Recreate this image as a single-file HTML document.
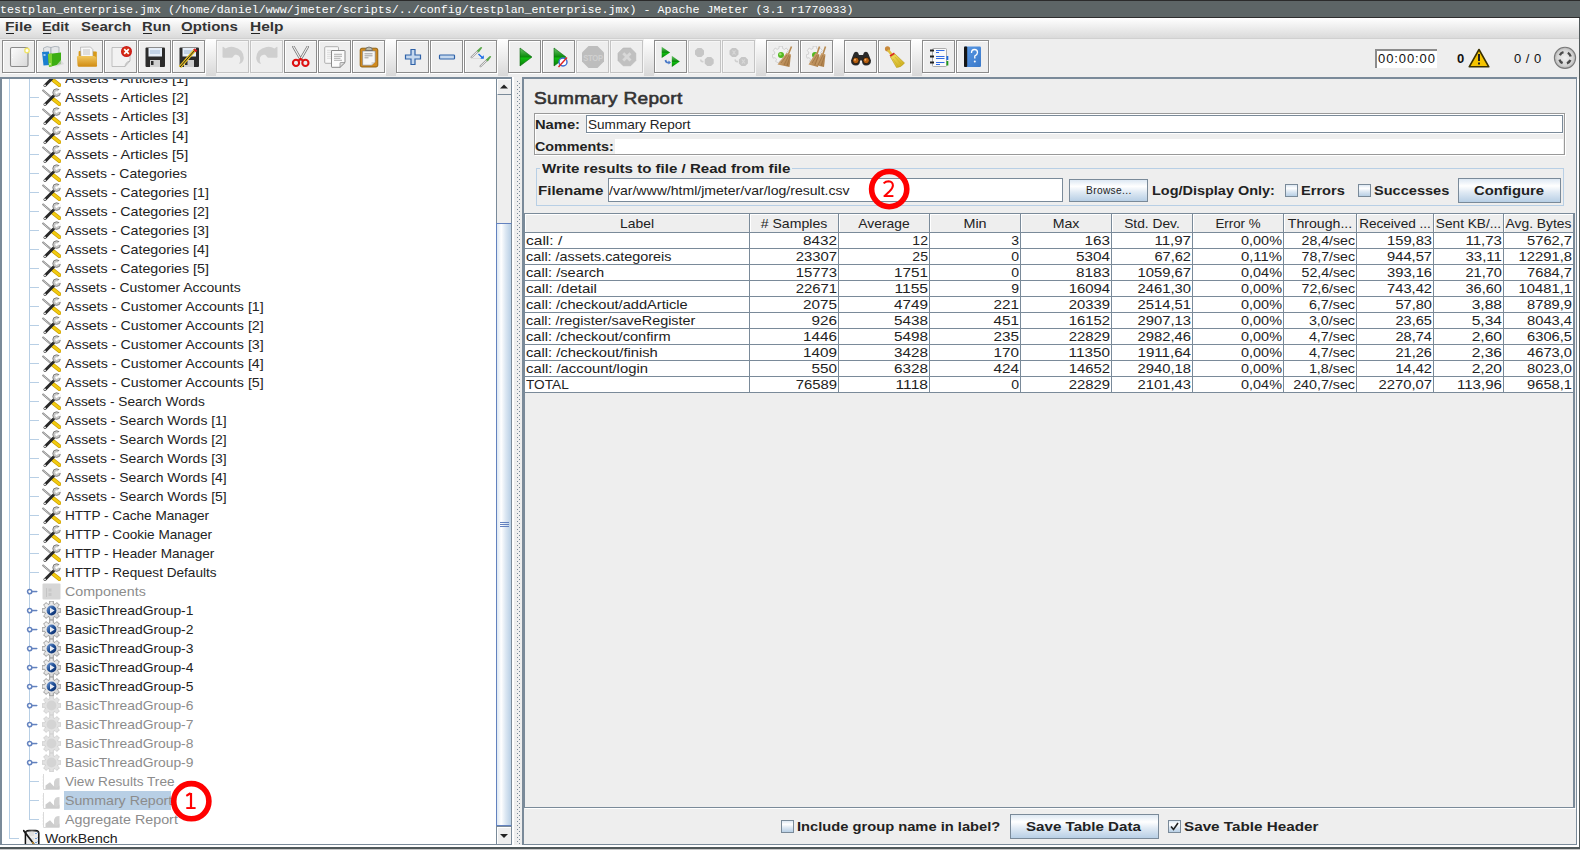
<!DOCTYPE html>
<html><head><meta charset="utf-8"><style>
*{margin:0;padding:0;box-sizing:border-box}
html,body{width:1580px;height:850px;overflow:hidden;background:#eeeeee}
body{position:relative;font-family:"Liberation Sans",sans-serif;color:#222}
div,svg{position:absolute}
.mono{font-family:"Liberation Mono",monospace;font-size:11.67px;line-height:11.67px;color:#fff;white-space:pre}
.menu{font-weight:bold;font-size:13px;line-height:13px;letter-spacing:1.1px;color:#333;white-space:pre}
.menu u{text-decoration:none;border-bottom:1px solid #333}
.tr{font-size:13px;line-height:13px;letter-spacing:0.54px;color:#222;white-space:pre}
.trd{font-size:13px;line-height:13px;letter-spacing:0.54px;color:#8c8c8c;white-space:pre}
.tc{font-size:13px;line-height:13px;letter-spacing:0.5px;color:#222;white-space:pre}
.b{font-weight:bold;font-size:13px;line-height:13px;letter-spacing:0.8px;color:#222;white-space:pre}
.ttl{font-weight:normal;font-size:17px;line-height:17px;letter-spacing:0.3px;color:#333;-webkit-text-stroke:0.6px #333;white-space:pre;transform:scaleX(1.12);transform-origin:0 0}
.sm{font-size:10.2px;line-height:10.2px;letter-spacing:0.2px;color:#222;white-space:pre}
.grad{background:linear-gradient(#dde8f3 0%,#ffffff 30%,#dde8f3 60%,#b8cfe5 100%)}
</style></head>
<body>
<div style="left:0px;top:0px;width:1580px;height:18px;background:#5d6566"></div>
<div style="left:0px;top:0px;width:1580px;height:1px;background:#2b2b2b"></div>
<div style="left:0px;top:17px;width:1580px;height:1px;background:#2e2e2e"></div>
<div class="mono" style="left:0px;top:5px;">testplan_enterprise.jmx (/home/daniel/www/jmeter/scripts/../config/testplan_enterprise.jmx) - Apache JMeter (3.1 r1770033)</div>
<div style="left:0px;top:18px;width:1580px;height:20px;background:linear-gradient(#ffffff,#dadada)"></div>
<div style="left:0px;top:38px;width:1580px;height:1px;background:#d0d0d0"></div>
<div class="menu" style="left:5.20px;top:20px;letter-spacing:0;transform:scaleX(1.205);transform-origin:0 0">File</div>
<div style="left:6px;top:33px;width:7.5px;height:1px;background:#222"></div>
<div class="menu" style="left:42.20px;top:20px;letter-spacing:0;transform:scaleX(1.1043);transform-origin:0 0">Edit</div>
<div style="left:43px;top:33px;width:8px;height:1px;background:#222"></div>
<div class="menu" style="left:81.20px;top:20px;letter-spacing:0;transform:scaleX(1.1585);transform-origin:0 0">Search</div>
<div class="menu" style="left:142.20px;top:20px;letter-spacing:0;transform:scaleX(1.1348);transform-origin:0 0">Run</div>
<div style="left:143px;top:33px;width:9px;height:1px;background:#222"></div>
<div class="menu" style="left:181.20px;top:20px;letter-spacing:0;transform:scaleX(1.1596);transform-origin:0 0">Options</div>
<div style="left:182px;top:33px;width:10.5px;height:1px;background:#222"></div>
<div class="menu" style="left:250.20px;top:20px;letter-spacing:0;transform:scaleX(1.1923);transform-origin:0 0">Help</div>
<div style="left:251px;top:33px;width:9px;height:1px;background:#222"></div>
<div style="left:206px;top:39px;width:10px;height:37px;background:linear-gradient(#ffffff,#d8d8d8)"></div>
<div style="left:386px;top:39px;width:10px;height:37px;background:linear-gradient(#ffffff,#d8d8d8)"></div>
<div style="left:498px;top:39px;width:10px;height:37px;background:linear-gradient(#ffffff,#d8d8d8)"></div>
<div style="left:644px;top:39px;width:10px;height:37px;background:linear-gradient(#ffffff,#d8d8d8)"></div>
<div style="left:756px;top:39px;width:10px;height:37px;background:linear-gradient(#ffffff,#d8d8d8)"></div>
<div style="left:834px;top:39px;width:10px;height:37px;background:linear-gradient(#ffffff,#d8d8d8)"></div>
<div style="left:912px;top:39px;width:10px;height:37px;background:linear-gradient(#ffffff,#d8d8d8)"></div>
<div style="left:990px;top:39px;width:590px;height:37px;background:#eeeeee"></div>
<div style="left:0px;top:77px;width:512px;height:2px;background:#7a8a99"></div>
<div style="left:522px;top:77px;width:1055px;height:2px;background:#7a8a99"></div>
<div style="left:0px;top:79px;width:496px;height:765px;background:#ffffff"></div>
<div style="left:0px;top:77px;width:2px;height:768px;background:#7a8a99"></div>
<div style="left:0px;top:844px;width:512px;height:1px;background:#7a8a99"></div>
<div style="left:0px;top:845px;width:1578px;height:2px;background:#ffffff"></div>
<div style="left:496px;top:79px;width:1px;height:765px;background:#7a8a99"></div>
<div style="left:497px;top:79px;width:14px;height:765px;background:#eeeeee"></div>
<div style="left:511px;top:79px;width:1px;height:766px;background:#7a8a99"></div>
<div style="left:497px;top:79px;width:14px;height:16px;background:#eeeeee;border-top:1px solid #fff;border-left:1px solid #fff;border-bottom:1px solid #7a8a99"></div>
<svg style="left:497px;top:79px" width="14" height="16"><path d="M3 9.5 L7 5.5 L11 9.5 Z" fill="#222"/></svg>
<div style="left:496px;top:223px;width:16px;height:603px;background:linear-gradient(90deg,#dde8f3 0%,#ffffff 30%,#dde8f3 60%,#b8cfe5 100%);border:1px solid #6382bf;border-right:1px solid #7a8a99"></div>
<div style="left:500px;top:522px;width:9px;height:1px;background:#6382bf"></div>
<div style="left:500px;top:524px;width:9px;height:1px;background:#6382bf"></div>
<div style="left:500px;top:526px;width:9px;height:1px;background:#6382bf"></div>
<div style="left:497px;top:826px;width:14px;height:18px;background:#eeeeee;border-top:1px solid #7a8a99"></div>
<div style="left:497px;top:827px;width:14px;height:17px;border-top:1px solid #fff;border-left:1px solid #fff"></div>
<svg style="left:497px;top:827px" width="14" height="17"><path d="M3 7 L11 7 L7 11 Z" fill="#222"/></svg>
<div style="left:512px;top:77px;width:2px;height:768px;background:#ffffff"></div>
<div style="left:514px;top:77px;width:8px;height:768px;background:#eeeeee"></div>
<svg style="left:0;top:0" width="1580" height="850"><path d="M517 81h1v1h-1z M519 83h1v1h-1z M517 85h1v1h-1z M519 87h1v1h-1z M517 89h1v1h-1z M519 91h1v1h-1z M517 93h1v1h-1z M519 95h1v1h-1z M517 97h1v1h-1z M519 99h1v1h-1z M517 101h1v1h-1z M519 103h1v1h-1z M517 105h1v1h-1z M519 107h1v1h-1z M517 109h1v1h-1z M519 111h1v1h-1z M517 113h1v1h-1z M519 115h1v1h-1z M517 117h1v1h-1z M519 119h1v1h-1z M517 121h1v1h-1z M519 123h1v1h-1z M517 125h1v1h-1z M519 127h1v1h-1z M517 129h1v1h-1z M519 131h1v1h-1z M517 133h1v1h-1z M519 135h1v1h-1z M517 137h1v1h-1z M519 139h1v1h-1z M517 141h1v1h-1z M519 143h1v1h-1z M517 145h1v1h-1z M519 147h1v1h-1z M517 149h1v1h-1z M519 151h1v1h-1z M517 153h1v1h-1z M519 155h1v1h-1z M517 157h1v1h-1z M519 159h1v1h-1z M517 161h1v1h-1z M519 163h1v1h-1z M517 165h1v1h-1z M519 167h1v1h-1z M517 169h1v1h-1z M519 171h1v1h-1z M517 173h1v1h-1z M519 175h1v1h-1z M517 177h1v1h-1z M519 179h1v1h-1z M517 181h1v1h-1z M519 183h1v1h-1z M517 185h1v1h-1z M519 187h1v1h-1z M517 189h1v1h-1z M519 191h1v1h-1z M517 193h1v1h-1z M519 195h1v1h-1z M517 197h1v1h-1z M519 199h1v1h-1z M517 201h1v1h-1z M519 203h1v1h-1z M517 205h1v1h-1z M519 207h1v1h-1z M517 209h1v1h-1z M519 211h1v1h-1z M517 213h1v1h-1z M519 215h1v1h-1z M517 217h1v1h-1z M519 219h1v1h-1z M517 221h1v1h-1z M519 223h1v1h-1z M517 225h1v1h-1z M519 227h1v1h-1z M517 229h1v1h-1z M519 231h1v1h-1z M517 233h1v1h-1z M519 235h1v1h-1z M517 237h1v1h-1z M519 239h1v1h-1z M517 241h1v1h-1z M519 243h1v1h-1z M517 245h1v1h-1z M519 247h1v1h-1z M517 249h1v1h-1z M519 251h1v1h-1z M517 253h1v1h-1z M519 255h1v1h-1z M517 257h1v1h-1z M519 259h1v1h-1z M517 261h1v1h-1z M519 263h1v1h-1z M517 265h1v1h-1z M519 267h1v1h-1z M517 269h1v1h-1z M519 271h1v1h-1z M517 273h1v1h-1z M519 275h1v1h-1z M517 277h1v1h-1z M519 279h1v1h-1z M517 281h1v1h-1z M519 283h1v1h-1z M517 285h1v1h-1z M519 287h1v1h-1z M517 289h1v1h-1z M519 291h1v1h-1z M517 293h1v1h-1z M519 295h1v1h-1z M517 297h1v1h-1z M519 299h1v1h-1z M517 301h1v1h-1z M519 303h1v1h-1z M517 305h1v1h-1z M519 307h1v1h-1z M517 309h1v1h-1z M519 311h1v1h-1z M517 313h1v1h-1z M519 315h1v1h-1z M517 317h1v1h-1z M519 319h1v1h-1z M517 321h1v1h-1z M519 323h1v1h-1z M517 325h1v1h-1z M519 327h1v1h-1z M517 329h1v1h-1z M519 331h1v1h-1z M517 333h1v1h-1z M519 335h1v1h-1z M517 337h1v1h-1z M519 339h1v1h-1z M517 341h1v1h-1z M519 343h1v1h-1z M517 345h1v1h-1z M519 347h1v1h-1z M517 349h1v1h-1z M519 351h1v1h-1z M517 353h1v1h-1z M519 355h1v1h-1z M517 357h1v1h-1z M519 359h1v1h-1z M517 361h1v1h-1z M519 363h1v1h-1z M517 365h1v1h-1z M519 367h1v1h-1z M517 369h1v1h-1z M519 371h1v1h-1z M517 373h1v1h-1z M519 375h1v1h-1z M517 377h1v1h-1z M519 379h1v1h-1z M517 381h1v1h-1z M519 383h1v1h-1z M517 385h1v1h-1z M519 387h1v1h-1z M517 389h1v1h-1z M519 391h1v1h-1z M517 393h1v1h-1z M519 395h1v1h-1z M517 397h1v1h-1z M519 399h1v1h-1z M517 401h1v1h-1z M519 403h1v1h-1z M517 405h1v1h-1z M519 407h1v1h-1z M517 409h1v1h-1z M519 411h1v1h-1z M517 413h1v1h-1z M519 415h1v1h-1z M517 417h1v1h-1z M519 419h1v1h-1z M517 421h1v1h-1z M519 423h1v1h-1z M517 425h1v1h-1z M519 427h1v1h-1z M517 429h1v1h-1z M519 431h1v1h-1z M517 433h1v1h-1z M519 435h1v1h-1z M517 437h1v1h-1z M519 439h1v1h-1z M517 441h1v1h-1z M519 443h1v1h-1z M517 445h1v1h-1z M519 447h1v1h-1z M517 449h1v1h-1z M519 451h1v1h-1z M517 453h1v1h-1z M519 455h1v1h-1z M517 457h1v1h-1z M519 459h1v1h-1z M517 461h1v1h-1z M519 463h1v1h-1z M517 465h1v1h-1z M519 467h1v1h-1z M517 469h1v1h-1z M519 471h1v1h-1z M517 473h1v1h-1z M519 475h1v1h-1z M517 477h1v1h-1z M519 479h1v1h-1z M517 481h1v1h-1z M519 483h1v1h-1z M517 485h1v1h-1z M519 487h1v1h-1z M517 489h1v1h-1z M519 491h1v1h-1z M517 493h1v1h-1z M519 495h1v1h-1z M517 497h1v1h-1z M519 499h1v1h-1z M517 501h1v1h-1z M519 503h1v1h-1z M517 505h1v1h-1z M519 507h1v1h-1z M517 509h1v1h-1z M519 511h1v1h-1z M517 513h1v1h-1z M519 515h1v1h-1z M517 517h1v1h-1z M519 519h1v1h-1z M517 521h1v1h-1z M519 523h1v1h-1z M517 525h1v1h-1z M519 527h1v1h-1z M517 529h1v1h-1z M519 531h1v1h-1z M517 533h1v1h-1z M519 535h1v1h-1z M517 537h1v1h-1z M519 539h1v1h-1z M517 541h1v1h-1z M519 543h1v1h-1z M517 545h1v1h-1z M519 547h1v1h-1z M517 549h1v1h-1z M519 551h1v1h-1z M517 553h1v1h-1z M519 555h1v1h-1z M517 557h1v1h-1z M519 559h1v1h-1z M517 561h1v1h-1z M519 563h1v1h-1z M517 565h1v1h-1z M519 567h1v1h-1z M517 569h1v1h-1z M519 571h1v1h-1z M517 573h1v1h-1z M519 575h1v1h-1z M517 577h1v1h-1z M519 579h1v1h-1z M517 581h1v1h-1z M519 583h1v1h-1z M517 585h1v1h-1z M519 587h1v1h-1z M517 589h1v1h-1z M519 591h1v1h-1z M517 593h1v1h-1z M519 595h1v1h-1z M517 597h1v1h-1z M519 599h1v1h-1z M517 601h1v1h-1z M519 603h1v1h-1z M517 605h1v1h-1z M519 607h1v1h-1z M517 609h1v1h-1z M519 611h1v1h-1z M517 613h1v1h-1z M519 615h1v1h-1z M517 617h1v1h-1z M519 619h1v1h-1z M517 621h1v1h-1z M519 623h1v1h-1z M517 625h1v1h-1z M519 627h1v1h-1z M517 629h1v1h-1z M519 631h1v1h-1z M517 633h1v1h-1z M519 635h1v1h-1z M517 637h1v1h-1z M519 639h1v1h-1z M517 641h1v1h-1z M519 643h1v1h-1z M517 645h1v1h-1z M519 647h1v1h-1z M517 649h1v1h-1z M519 651h1v1h-1z M517 653h1v1h-1z M519 655h1v1h-1z M517 657h1v1h-1z M519 659h1v1h-1z M517 661h1v1h-1z M519 663h1v1h-1z M517 665h1v1h-1z M519 667h1v1h-1z M517 669h1v1h-1z M519 671h1v1h-1z M517 673h1v1h-1z M519 675h1v1h-1z M517 677h1v1h-1z M519 679h1v1h-1z M517 681h1v1h-1z M519 683h1v1h-1z M517 685h1v1h-1z M519 687h1v1h-1z M517 689h1v1h-1z M519 691h1v1h-1z M517 693h1v1h-1z M519 695h1v1h-1z M517 697h1v1h-1z M519 699h1v1h-1z M517 701h1v1h-1z M519 703h1v1h-1z M517 705h1v1h-1z M519 707h1v1h-1z M517 709h1v1h-1z M519 711h1v1h-1z M517 713h1v1h-1z M519 715h1v1h-1z M517 717h1v1h-1z M519 719h1v1h-1z M517 721h1v1h-1z M519 723h1v1h-1z M517 725h1v1h-1z M519 727h1v1h-1z M517 729h1v1h-1z M519 731h1v1h-1z M517 733h1v1h-1z M519 735h1v1h-1z M517 737h1v1h-1z M519 739h1v1h-1z M517 741h1v1h-1z M519 743h1v1h-1z M517 745h1v1h-1z M519 747h1v1h-1z M517 749h1v1h-1z M519 751h1v1h-1z M517 753h1v1h-1z M519 755h1v1h-1z M517 757h1v1h-1z M519 759h1v1h-1z M517 761h1v1h-1z M519 763h1v1h-1z M517 765h1v1h-1z M519 767h1v1h-1z M517 769h1v1h-1z M519 771h1v1h-1z M517 773h1v1h-1z M519 775h1v1h-1z M517 777h1v1h-1z M519 779h1v1h-1z M517 781h1v1h-1z M519 783h1v1h-1z M517 785h1v1h-1z M519 787h1v1h-1z M517 789h1v1h-1z M519 791h1v1h-1z M517 793h1v1h-1z M519 795h1v1h-1z M517 797h1v1h-1z M519 799h1v1h-1z M517 801h1v1h-1z M519 803h1v1h-1z M517 805h1v1h-1z M519 807h1v1h-1z M517 809h1v1h-1z M519 811h1v1h-1z M517 813h1v1h-1z M519 815h1v1h-1z M517 817h1v1h-1z M519 819h1v1h-1z M517 821h1v1h-1z M519 823h1v1h-1z M517 825h1v1h-1z M519 827h1v1h-1z M517 829h1v1h-1z M519 831h1v1h-1z M517 833h1v1h-1z M519 835h1v1h-1z M517 837h1v1h-1z M519 839h1v1h-1z M517 841h1v1h-1z M519 843h1v1h-1z" fill="#7a8a99"/></svg>
<div style="left:522px;top:77px;width:2px;height:768px;background:#7a8a99"></div>
<div style="left:1576px;top:77px;width:1px;height:768px;background:#7a8a99"></div>
<div style="left:522px;top:844px;width:1055px;height:1px;background:#7a8a99"></div>
<div style="left:1577px;top:79px;width:2px;height:768px;background:#ffffff"></div>
<div style="left:1579px;top:18px;width:1px;height:832px;background:#50585a"></div>
<div style="left:0px;top:847px;width:1580px;height:2px;background:#50585a"></div>
<div style="left:0px;top:849px;width:1580px;height:1px;background:#c8c8c8"></div>
<div style="left:2px;top:79px;width:494px;height:765px;overflow:hidden"><div style="left:-2px;top:-79px;width:1580px;height:850px">
<div style="left:9px;top:79px;width:1px;height:760px;background:#b8cfe5"></div>
<div style="left:9px;top:838px;width:10px;height:1px;background:#b8cfe5"></div>
<div style="left:29px;top:79px;width:1px;height:741px;background:#b8cfe5"></div>
<div style="left:29px;top:78px;width:10px;height:1px;background:#b8cfe5"></div>
<div style="left:29px;top:97px;width:10px;height:1px;background:#b8cfe5"></div>
<div style="left:29px;top:116px;width:10px;height:1px;background:#b8cfe5"></div>
<div style="left:29px;top:135px;width:10px;height:1px;background:#b8cfe5"></div>
<div style="left:29px;top:154px;width:10px;height:1px;background:#b8cfe5"></div>
<div style="left:29px;top:173px;width:10px;height:1px;background:#b8cfe5"></div>
<div style="left:29px;top:192px;width:10px;height:1px;background:#b8cfe5"></div>
<div style="left:29px;top:211px;width:10px;height:1px;background:#b8cfe5"></div>
<div style="left:29px;top:230px;width:10px;height:1px;background:#b8cfe5"></div>
<div style="left:29px;top:249px;width:10px;height:1px;background:#b8cfe5"></div>
<div style="left:29px;top:268px;width:10px;height:1px;background:#b8cfe5"></div>
<div style="left:29px;top:287px;width:10px;height:1px;background:#b8cfe5"></div>
<div style="left:29px;top:306px;width:10px;height:1px;background:#b8cfe5"></div>
<div style="left:29px;top:325px;width:10px;height:1px;background:#b8cfe5"></div>
<div style="left:29px;top:344px;width:10px;height:1px;background:#b8cfe5"></div>
<div style="left:29px;top:363px;width:10px;height:1px;background:#b8cfe5"></div>
<div style="left:29px;top:382px;width:10px;height:1px;background:#b8cfe5"></div>
<div style="left:29px;top:401px;width:10px;height:1px;background:#b8cfe5"></div>
<div style="left:29px;top:420px;width:10px;height:1px;background:#b8cfe5"></div>
<div style="left:29px;top:439px;width:10px;height:1px;background:#b8cfe5"></div>
<div style="left:29px;top:458px;width:10px;height:1px;background:#b8cfe5"></div>
<div style="left:29px;top:477px;width:10px;height:1px;background:#b8cfe5"></div>
<div style="left:29px;top:496px;width:10px;height:1px;background:#b8cfe5"></div>
<div style="left:29px;top:515px;width:10px;height:1px;background:#b8cfe5"></div>
<div style="left:29px;top:534px;width:10px;height:1px;background:#b8cfe5"></div>
<div style="left:29px;top:553px;width:10px;height:1px;background:#b8cfe5"></div>
<div style="left:29px;top:572px;width:10px;height:1px;background:#b8cfe5"></div>
<div style="left:29px;top:781px;width:10px;height:1px;background:#b8cfe5"></div>
<div style="left:29px;top:800px;width:10px;height:1px;background:#b8cfe5"></div>
<div style="left:29px;top:819px;width:10px;height:1px;background:#b8cfe5"></div>
<div style="left:64px;top:791px;width:107px;height:19px;background:#b8cfe5"></div>
<svg style="left:42px;top:69px" width="19" height="19"><line x1="0.5" y1="2" x2="10.5" y2="10.5" stroke="#777" stroke-width="1.8"/>
<line x1="0.5" y1="2" x2="10.5" y2="10.5" stroke="#f4f4f4" stroke-width="0.7"/>
<line x1="11" y1="11" x2="17.3" y2="16" stroke="#c89a00" stroke-width="4" stroke-linecap="round"/>
<line x1="11" y1="11" x2="17.3" y2="16" stroke="#f2cc10" stroke-width="2.6" stroke-linecap="round"/>
<line x1="3" y1="16.5" x2="11.5" y2="8" stroke="#2a2a2a" stroke-width="3" stroke-linecap="round"/>
<circle cx="3" cy="16.5" r="0.9" fill="#fff"/>
<circle cx="14.6" cy="4.6" r="3.8" fill="#c8c8c8" stroke="#6a6a6a" stroke-width="0.8"/>
<path d="M14.6 4.6 L18.5 0.2 L19 5 Z" fill="#fff"/>
<circle cx="14.6" cy="4.6" r="1.3" fill="#fff"/></svg>
<div class="tr" style="left:65px;top:72px;transform:scaleX(1.1142);transform-origin:0 0;letter-spacing:0px;">Assets - Articles [1]</div>
<svg style="left:42px;top:88px" width="19" height="19"><line x1="0.5" y1="2" x2="10.5" y2="10.5" stroke="#777" stroke-width="1.8"/>
<line x1="0.5" y1="2" x2="10.5" y2="10.5" stroke="#f4f4f4" stroke-width="0.7"/>
<line x1="11" y1="11" x2="17.3" y2="16" stroke="#c89a00" stroke-width="4" stroke-linecap="round"/>
<line x1="11" y1="11" x2="17.3" y2="16" stroke="#f2cc10" stroke-width="2.6" stroke-linecap="round"/>
<line x1="3" y1="16.5" x2="11.5" y2="8" stroke="#2a2a2a" stroke-width="3" stroke-linecap="round"/>
<circle cx="3" cy="16.5" r="0.9" fill="#fff"/>
<circle cx="14.6" cy="4.6" r="3.8" fill="#c8c8c8" stroke="#6a6a6a" stroke-width="0.8"/>
<path d="M14.6 4.6 L18.5 0.2 L19 5 Z" fill="#fff"/>
<circle cx="14.6" cy="4.6" r="1.3" fill="#fff"/></svg>
<div class="tr" style="left:65px;top:91px;transform:scaleX(1.1142);transform-origin:0 0;letter-spacing:0px;">Assets - Articles [2]</div>
<svg style="left:42px;top:107px" width="19" height="19"><line x1="0.5" y1="2" x2="10.5" y2="10.5" stroke="#777" stroke-width="1.8"/>
<line x1="0.5" y1="2" x2="10.5" y2="10.5" stroke="#f4f4f4" stroke-width="0.7"/>
<line x1="11" y1="11" x2="17.3" y2="16" stroke="#c89a00" stroke-width="4" stroke-linecap="round"/>
<line x1="11" y1="11" x2="17.3" y2="16" stroke="#f2cc10" stroke-width="2.6" stroke-linecap="round"/>
<line x1="3" y1="16.5" x2="11.5" y2="8" stroke="#2a2a2a" stroke-width="3" stroke-linecap="round"/>
<circle cx="3" cy="16.5" r="0.9" fill="#fff"/>
<circle cx="14.6" cy="4.6" r="3.8" fill="#c8c8c8" stroke="#6a6a6a" stroke-width="0.8"/>
<path d="M14.6 4.6 L18.5 0.2 L19 5 Z" fill="#fff"/>
<circle cx="14.6" cy="4.6" r="1.3" fill="#fff"/></svg>
<div class="tr" style="left:65px;top:110px;transform:scaleX(1.1142);transform-origin:0 0;letter-spacing:0px;">Assets - Articles [3]</div>
<svg style="left:42px;top:126px" width="19" height="19"><line x1="0.5" y1="2" x2="10.5" y2="10.5" stroke="#777" stroke-width="1.8"/>
<line x1="0.5" y1="2" x2="10.5" y2="10.5" stroke="#f4f4f4" stroke-width="0.7"/>
<line x1="11" y1="11" x2="17.3" y2="16" stroke="#c89a00" stroke-width="4" stroke-linecap="round"/>
<line x1="11" y1="11" x2="17.3" y2="16" stroke="#f2cc10" stroke-width="2.6" stroke-linecap="round"/>
<line x1="3" y1="16.5" x2="11.5" y2="8" stroke="#2a2a2a" stroke-width="3" stroke-linecap="round"/>
<circle cx="3" cy="16.5" r="0.9" fill="#fff"/>
<circle cx="14.6" cy="4.6" r="3.8" fill="#c8c8c8" stroke="#6a6a6a" stroke-width="0.8"/>
<path d="M14.6 4.6 L18.5 0.2 L19 5 Z" fill="#fff"/>
<circle cx="14.6" cy="4.6" r="1.3" fill="#fff"/></svg>
<div class="tr" style="left:65px;top:129px;transform:scaleX(1.1142);transform-origin:0 0;letter-spacing:0px;">Assets - Articles [4]</div>
<svg style="left:42px;top:145px" width="19" height="19"><line x1="0.5" y1="2" x2="10.5" y2="10.5" stroke="#777" stroke-width="1.8"/>
<line x1="0.5" y1="2" x2="10.5" y2="10.5" stroke="#f4f4f4" stroke-width="0.7"/>
<line x1="11" y1="11" x2="17.3" y2="16" stroke="#c89a00" stroke-width="4" stroke-linecap="round"/>
<line x1="11" y1="11" x2="17.3" y2="16" stroke="#f2cc10" stroke-width="2.6" stroke-linecap="round"/>
<line x1="3" y1="16.5" x2="11.5" y2="8" stroke="#2a2a2a" stroke-width="3" stroke-linecap="round"/>
<circle cx="3" cy="16.5" r="0.9" fill="#fff"/>
<circle cx="14.6" cy="4.6" r="3.8" fill="#c8c8c8" stroke="#6a6a6a" stroke-width="0.8"/>
<path d="M14.6 4.6 L18.5 0.2 L19 5 Z" fill="#fff"/>
<circle cx="14.6" cy="4.6" r="1.3" fill="#fff"/></svg>
<div class="tr" style="left:65px;top:148px;transform:scaleX(1.1142);transform-origin:0 0;letter-spacing:0px;">Assets - Articles [5]</div>
<svg style="left:42px;top:164px" width="19" height="19"><line x1="0.5" y1="2" x2="10.5" y2="10.5" stroke="#777" stroke-width="1.8"/>
<line x1="0.5" y1="2" x2="10.5" y2="10.5" stroke="#f4f4f4" stroke-width="0.7"/>
<line x1="11" y1="11" x2="17.3" y2="16" stroke="#c89a00" stroke-width="4" stroke-linecap="round"/>
<line x1="11" y1="11" x2="17.3" y2="16" stroke="#f2cc10" stroke-width="2.6" stroke-linecap="round"/>
<line x1="3" y1="16.5" x2="11.5" y2="8" stroke="#2a2a2a" stroke-width="3" stroke-linecap="round"/>
<circle cx="3" cy="16.5" r="0.9" fill="#fff"/>
<circle cx="14.6" cy="4.6" r="3.8" fill="#c8c8c8" stroke="#6a6a6a" stroke-width="0.8"/>
<path d="M14.6 4.6 L18.5 0.2 L19 5 Z" fill="#fff"/>
<circle cx="14.6" cy="4.6" r="1.3" fill="#fff"/></svg>
<div class="tr" style="left:65px;top:167px;transform:scaleX(1.0751);transform-origin:0 0;letter-spacing:0px;">Assets - Categories</div>
<svg style="left:42px;top:183px" width="19" height="19"><line x1="0.5" y1="2" x2="10.5" y2="10.5" stroke="#777" stroke-width="1.8"/>
<line x1="0.5" y1="2" x2="10.5" y2="10.5" stroke="#f4f4f4" stroke-width="0.7"/>
<line x1="11" y1="11" x2="17.3" y2="16" stroke="#c89a00" stroke-width="4" stroke-linecap="round"/>
<line x1="11" y1="11" x2="17.3" y2="16" stroke="#f2cc10" stroke-width="2.6" stroke-linecap="round"/>
<line x1="3" y1="16.5" x2="11.5" y2="8" stroke="#2a2a2a" stroke-width="3" stroke-linecap="round"/>
<circle cx="3" cy="16.5" r="0.9" fill="#fff"/>
<circle cx="14.6" cy="4.6" r="3.8" fill="#c8c8c8" stroke="#6a6a6a" stroke-width="0.8"/>
<path d="M14.6 4.6 L18.5 0.2 L19 5 Z" fill="#fff"/>
<circle cx="14.6" cy="4.6" r="1.3" fill="#fff"/></svg>
<div class="tr" style="left:65px;top:186px;transform:scaleX(1.0939);transform-origin:0 0;letter-spacing:0px;">Assets - Categories [1]</div>
<svg style="left:42px;top:202px" width="19" height="19"><line x1="0.5" y1="2" x2="10.5" y2="10.5" stroke="#777" stroke-width="1.8"/>
<line x1="0.5" y1="2" x2="10.5" y2="10.5" stroke="#f4f4f4" stroke-width="0.7"/>
<line x1="11" y1="11" x2="17.3" y2="16" stroke="#c89a00" stroke-width="4" stroke-linecap="round"/>
<line x1="11" y1="11" x2="17.3" y2="16" stroke="#f2cc10" stroke-width="2.6" stroke-linecap="round"/>
<line x1="3" y1="16.5" x2="11.5" y2="8" stroke="#2a2a2a" stroke-width="3" stroke-linecap="round"/>
<circle cx="3" cy="16.5" r="0.9" fill="#fff"/>
<circle cx="14.6" cy="4.6" r="3.8" fill="#c8c8c8" stroke="#6a6a6a" stroke-width="0.8"/>
<path d="M14.6 4.6 L18.5 0.2 L19 5 Z" fill="#fff"/>
<circle cx="14.6" cy="4.6" r="1.3" fill="#fff"/></svg>
<div class="tr" style="left:65px;top:205px;transform:scaleX(1.0939);transform-origin:0 0;letter-spacing:0px;">Assets - Categories [2]</div>
<svg style="left:42px;top:221px" width="19" height="19"><line x1="0.5" y1="2" x2="10.5" y2="10.5" stroke="#777" stroke-width="1.8"/>
<line x1="0.5" y1="2" x2="10.5" y2="10.5" stroke="#f4f4f4" stroke-width="0.7"/>
<line x1="11" y1="11" x2="17.3" y2="16" stroke="#c89a00" stroke-width="4" stroke-linecap="round"/>
<line x1="11" y1="11" x2="17.3" y2="16" stroke="#f2cc10" stroke-width="2.6" stroke-linecap="round"/>
<line x1="3" y1="16.5" x2="11.5" y2="8" stroke="#2a2a2a" stroke-width="3" stroke-linecap="round"/>
<circle cx="3" cy="16.5" r="0.9" fill="#fff"/>
<circle cx="14.6" cy="4.6" r="3.8" fill="#c8c8c8" stroke="#6a6a6a" stroke-width="0.8"/>
<path d="M14.6 4.6 L18.5 0.2 L19 5 Z" fill="#fff"/>
<circle cx="14.6" cy="4.6" r="1.3" fill="#fff"/></svg>
<div class="tr" style="left:65px;top:224px;transform:scaleX(1.0939);transform-origin:0 0;letter-spacing:0px;">Assets - Categories [3]</div>
<svg style="left:42px;top:240px" width="19" height="19"><line x1="0.5" y1="2" x2="10.5" y2="10.5" stroke="#777" stroke-width="1.8"/>
<line x1="0.5" y1="2" x2="10.5" y2="10.5" stroke="#f4f4f4" stroke-width="0.7"/>
<line x1="11" y1="11" x2="17.3" y2="16" stroke="#c89a00" stroke-width="4" stroke-linecap="round"/>
<line x1="11" y1="11" x2="17.3" y2="16" stroke="#f2cc10" stroke-width="2.6" stroke-linecap="round"/>
<line x1="3" y1="16.5" x2="11.5" y2="8" stroke="#2a2a2a" stroke-width="3" stroke-linecap="round"/>
<circle cx="3" cy="16.5" r="0.9" fill="#fff"/>
<circle cx="14.6" cy="4.6" r="3.8" fill="#c8c8c8" stroke="#6a6a6a" stroke-width="0.8"/>
<path d="M14.6 4.6 L18.5 0.2 L19 5 Z" fill="#fff"/>
<circle cx="14.6" cy="4.6" r="1.3" fill="#fff"/></svg>
<div class="tr" style="left:65px;top:243px;transform:scaleX(1.0939);transform-origin:0 0;letter-spacing:0px;">Assets - Categories [4]</div>
<svg style="left:42px;top:259px" width="19" height="19"><line x1="0.5" y1="2" x2="10.5" y2="10.5" stroke="#777" stroke-width="1.8"/>
<line x1="0.5" y1="2" x2="10.5" y2="10.5" stroke="#f4f4f4" stroke-width="0.7"/>
<line x1="11" y1="11" x2="17.3" y2="16" stroke="#c89a00" stroke-width="4" stroke-linecap="round"/>
<line x1="11" y1="11" x2="17.3" y2="16" stroke="#f2cc10" stroke-width="2.6" stroke-linecap="round"/>
<line x1="3" y1="16.5" x2="11.5" y2="8" stroke="#2a2a2a" stroke-width="3" stroke-linecap="round"/>
<circle cx="3" cy="16.5" r="0.9" fill="#fff"/>
<circle cx="14.6" cy="4.6" r="3.8" fill="#c8c8c8" stroke="#6a6a6a" stroke-width="0.8"/>
<path d="M14.6 4.6 L18.5 0.2 L19 5 Z" fill="#fff"/>
<circle cx="14.6" cy="4.6" r="1.3" fill="#fff"/></svg>
<div class="tr" style="left:65px;top:262px;transform:scaleX(1.0939);transform-origin:0 0;letter-spacing:0px;">Assets - Categories [5]</div>
<svg style="left:42px;top:278px" width="19" height="19"><line x1="0.5" y1="2" x2="10.5" y2="10.5" stroke="#777" stroke-width="1.8"/>
<line x1="0.5" y1="2" x2="10.5" y2="10.5" stroke="#f4f4f4" stroke-width="0.7"/>
<line x1="11" y1="11" x2="17.3" y2="16" stroke="#c89a00" stroke-width="4" stroke-linecap="round"/>
<line x1="11" y1="11" x2="17.3" y2="16" stroke="#f2cc10" stroke-width="2.6" stroke-linecap="round"/>
<line x1="3" y1="16.5" x2="11.5" y2="8" stroke="#2a2a2a" stroke-width="3" stroke-linecap="round"/>
<circle cx="3" cy="16.5" r="0.9" fill="#fff"/>
<circle cx="14.6" cy="4.6" r="3.8" fill="#c8c8c8" stroke="#6a6a6a" stroke-width="0.8"/>
<path d="M14.6 4.6 L18.5 0.2 L19 5 Z" fill="#fff"/>
<circle cx="14.6" cy="4.6" r="1.3" fill="#fff"/></svg>
<div class="tr" style="left:65px;top:281px;transform:scaleX(1.0764);transform-origin:0 0;letter-spacing:0px;">Assets - Customer Accounts</div>
<svg style="left:42px;top:297px" width="19" height="19"><line x1="0.5" y1="2" x2="10.5" y2="10.5" stroke="#777" stroke-width="1.8"/>
<line x1="0.5" y1="2" x2="10.5" y2="10.5" stroke="#f4f4f4" stroke-width="0.7"/>
<line x1="11" y1="11" x2="17.3" y2="16" stroke="#c89a00" stroke-width="4" stroke-linecap="round"/>
<line x1="11" y1="11" x2="17.3" y2="16" stroke="#f2cc10" stroke-width="2.6" stroke-linecap="round"/>
<line x1="3" y1="16.5" x2="11.5" y2="8" stroke="#2a2a2a" stroke-width="3" stroke-linecap="round"/>
<circle cx="3" cy="16.5" r="0.9" fill="#fff"/>
<circle cx="14.6" cy="4.6" r="3.8" fill="#c8c8c8" stroke="#6a6a6a" stroke-width="0.8"/>
<path d="M14.6 4.6 L18.5 0.2 L19 5 Z" fill="#fff"/>
<circle cx="14.6" cy="4.6" r="1.3" fill="#fff"/></svg>
<div class="tr" style="left:65px;top:300px;transform:scaleX(1.096);transform-origin:0 0;letter-spacing:0px;">Assets - Customer Accounts [1]</div>
<svg style="left:42px;top:316px" width="19" height="19"><line x1="0.5" y1="2" x2="10.5" y2="10.5" stroke="#777" stroke-width="1.8"/>
<line x1="0.5" y1="2" x2="10.5" y2="10.5" stroke="#f4f4f4" stroke-width="0.7"/>
<line x1="11" y1="11" x2="17.3" y2="16" stroke="#c89a00" stroke-width="4" stroke-linecap="round"/>
<line x1="11" y1="11" x2="17.3" y2="16" stroke="#f2cc10" stroke-width="2.6" stroke-linecap="round"/>
<line x1="3" y1="16.5" x2="11.5" y2="8" stroke="#2a2a2a" stroke-width="3" stroke-linecap="round"/>
<circle cx="3" cy="16.5" r="0.9" fill="#fff"/>
<circle cx="14.6" cy="4.6" r="3.8" fill="#c8c8c8" stroke="#6a6a6a" stroke-width="0.8"/>
<path d="M14.6 4.6 L18.5 0.2 L19 5 Z" fill="#fff"/>
<circle cx="14.6" cy="4.6" r="1.3" fill="#fff"/></svg>
<div class="tr" style="left:65px;top:319px;transform:scaleX(1.096);transform-origin:0 0;letter-spacing:0px;">Assets - Customer Accounts [2]</div>
<svg style="left:42px;top:335px" width="19" height="19"><line x1="0.5" y1="2" x2="10.5" y2="10.5" stroke="#777" stroke-width="1.8"/>
<line x1="0.5" y1="2" x2="10.5" y2="10.5" stroke="#f4f4f4" stroke-width="0.7"/>
<line x1="11" y1="11" x2="17.3" y2="16" stroke="#c89a00" stroke-width="4" stroke-linecap="round"/>
<line x1="11" y1="11" x2="17.3" y2="16" stroke="#f2cc10" stroke-width="2.6" stroke-linecap="round"/>
<line x1="3" y1="16.5" x2="11.5" y2="8" stroke="#2a2a2a" stroke-width="3" stroke-linecap="round"/>
<circle cx="3" cy="16.5" r="0.9" fill="#fff"/>
<circle cx="14.6" cy="4.6" r="3.8" fill="#c8c8c8" stroke="#6a6a6a" stroke-width="0.8"/>
<path d="M14.6 4.6 L18.5 0.2 L19 5 Z" fill="#fff"/>
<circle cx="14.6" cy="4.6" r="1.3" fill="#fff"/></svg>
<div class="tr" style="left:65px;top:338px;transform:scaleX(1.096);transform-origin:0 0;letter-spacing:0px;">Assets - Customer Accounts [3]</div>
<svg style="left:42px;top:354px" width="19" height="19"><line x1="0.5" y1="2" x2="10.5" y2="10.5" stroke="#777" stroke-width="1.8"/>
<line x1="0.5" y1="2" x2="10.5" y2="10.5" stroke="#f4f4f4" stroke-width="0.7"/>
<line x1="11" y1="11" x2="17.3" y2="16" stroke="#c89a00" stroke-width="4" stroke-linecap="round"/>
<line x1="11" y1="11" x2="17.3" y2="16" stroke="#f2cc10" stroke-width="2.6" stroke-linecap="round"/>
<line x1="3" y1="16.5" x2="11.5" y2="8" stroke="#2a2a2a" stroke-width="3" stroke-linecap="round"/>
<circle cx="3" cy="16.5" r="0.9" fill="#fff"/>
<circle cx="14.6" cy="4.6" r="3.8" fill="#c8c8c8" stroke="#6a6a6a" stroke-width="0.8"/>
<path d="M14.6 4.6 L18.5 0.2 L19 5 Z" fill="#fff"/>
<circle cx="14.6" cy="4.6" r="1.3" fill="#fff"/></svg>
<div class="tr" style="left:65px;top:357px;transform:scaleX(1.096);transform-origin:0 0;letter-spacing:0px;">Assets - Customer Accounts [4]</div>
<svg style="left:42px;top:373px" width="19" height="19"><line x1="0.5" y1="2" x2="10.5" y2="10.5" stroke="#777" stroke-width="1.8"/>
<line x1="0.5" y1="2" x2="10.5" y2="10.5" stroke="#f4f4f4" stroke-width="0.7"/>
<line x1="11" y1="11" x2="17.3" y2="16" stroke="#c89a00" stroke-width="4" stroke-linecap="round"/>
<line x1="11" y1="11" x2="17.3" y2="16" stroke="#f2cc10" stroke-width="2.6" stroke-linecap="round"/>
<line x1="3" y1="16.5" x2="11.5" y2="8" stroke="#2a2a2a" stroke-width="3" stroke-linecap="round"/>
<circle cx="3" cy="16.5" r="0.9" fill="#fff"/>
<circle cx="14.6" cy="4.6" r="3.8" fill="#c8c8c8" stroke="#6a6a6a" stroke-width="0.8"/>
<path d="M14.6 4.6 L18.5 0.2 L19 5 Z" fill="#fff"/>
<circle cx="14.6" cy="4.6" r="1.3" fill="#fff"/></svg>
<div class="tr" style="left:65px;top:376px;transform:scaleX(1.096);transform-origin:0 0;letter-spacing:0px;">Assets - Customer Accounts [5]</div>
<svg style="left:42px;top:392px" width="19" height="19"><line x1="0.5" y1="2" x2="10.5" y2="10.5" stroke="#777" stroke-width="1.8"/>
<line x1="0.5" y1="2" x2="10.5" y2="10.5" stroke="#f4f4f4" stroke-width="0.7"/>
<line x1="11" y1="11" x2="17.3" y2="16" stroke="#c89a00" stroke-width="4" stroke-linecap="round"/>
<line x1="11" y1="11" x2="17.3" y2="16" stroke="#f2cc10" stroke-width="2.6" stroke-linecap="round"/>
<line x1="3" y1="16.5" x2="11.5" y2="8" stroke="#2a2a2a" stroke-width="3" stroke-linecap="round"/>
<circle cx="3" cy="16.5" r="0.9" fill="#fff"/>
<circle cx="14.6" cy="4.6" r="3.8" fill="#c8c8c8" stroke="#6a6a6a" stroke-width="0.8"/>
<path d="M14.6 4.6 L18.5 0.2 L19 5 Z" fill="#fff"/>
<circle cx="14.6" cy="4.6" r="1.3" fill="#fff"/></svg>
<div class="tr" style="left:65px;top:395px;transform:scaleX(1.0538);transform-origin:0 0;letter-spacing:0px;">Assets - Search Words</div>
<svg style="left:42px;top:411px" width="19" height="19"><line x1="0.5" y1="2" x2="10.5" y2="10.5" stroke="#777" stroke-width="1.8"/>
<line x1="0.5" y1="2" x2="10.5" y2="10.5" stroke="#f4f4f4" stroke-width="0.7"/>
<line x1="11" y1="11" x2="17.3" y2="16" stroke="#c89a00" stroke-width="4" stroke-linecap="round"/>
<line x1="11" y1="11" x2="17.3" y2="16" stroke="#f2cc10" stroke-width="2.6" stroke-linecap="round"/>
<line x1="3" y1="16.5" x2="11.5" y2="8" stroke="#2a2a2a" stroke-width="3" stroke-linecap="round"/>
<circle cx="3" cy="16.5" r="0.9" fill="#fff"/>
<circle cx="14.6" cy="4.6" r="3.8" fill="#c8c8c8" stroke="#6a6a6a" stroke-width="0.8"/>
<path d="M14.6 4.6 L18.5 0.2 L19 5 Z" fill="#fff"/>
<circle cx="14.6" cy="4.6" r="1.3" fill="#fff"/></svg>
<div class="tr" style="left:65px;top:414px;transform:scaleX(1.0728);transform-origin:0 0;letter-spacing:0px;">Assets - Search Words [1]</div>
<svg style="left:42px;top:430px" width="19" height="19"><line x1="0.5" y1="2" x2="10.5" y2="10.5" stroke="#777" stroke-width="1.8"/>
<line x1="0.5" y1="2" x2="10.5" y2="10.5" stroke="#f4f4f4" stroke-width="0.7"/>
<line x1="11" y1="11" x2="17.3" y2="16" stroke="#c89a00" stroke-width="4" stroke-linecap="round"/>
<line x1="11" y1="11" x2="17.3" y2="16" stroke="#f2cc10" stroke-width="2.6" stroke-linecap="round"/>
<line x1="3" y1="16.5" x2="11.5" y2="8" stroke="#2a2a2a" stroke-width="3" stroke-linecap="round"/>
<circle cx="3" cy="16.5" r="0.9" fill="#fff"/>
<circle cx="14.6" cy="4.6" r="3.8" fill="#c8c8c8" stroke="#6a6a6a" stroke-width="0.8"/>
<path d="M14.6 4.6 L18.5 0.2 L19 5 Z" fill="#fff"/>
<circle cx="14.6" cy="4.6" r="1.3" fill="#fff"/></svg>
<div class="tr" style="left:65px;top:433px;transform:scaleX(1.0728);transform-origin:0 0;letter-spacing:0px;">Assets - Search Words [2]</div>
<svg style="left:42px;top:449px" width="19" height="19"><line x1="0.5" y1="2" x2="10.5" y2="10.5" stroke="#777" stroke-width="1.8"/>
<line x1="0.5" y1="2" x2="10.5" y2="10.5" stroke="#f4f4f4" stroke-width="0.7"/>
<line x1="11" y1="11" x2="17.3" y2="16" stroke="#c89a00" stroke-width="4" stroke-linecap="round"/>
<line x1="11" y1="11" x2="17.3" y2="16" stroke="#f2cc10" stroke-width="2.6" stroke-linecap="round"/>
<line x1="3" y1="16.5" x2="11.5" y2="8" stroke="#2a2a2a" stroke-width="3" stroke-linecap="round"/>
<circle cx="3" cy="16.5" r="0.9" fill="#fff"/>
<circle cx="14.6" cy="4.6" r="3.8" fill="#c8c8c8" stroke="#6a6a6a" stroke-width="0.8"/>
<path d="M14.6 4.6 L18.5 0.2 L19 5 Z" fill="#fff"/>
<circle cx="14.6" cy="4.6" r="1.3" fill="#fff"/></svg>
<div class="tr" style="left:65px;top:452px;transform:scaleX(1.0728);transform-origin:0 0;letter-spacing:0px;">Assets - Search Words [3]</div>
<svg style="left:42px;top:468px" width="19" height="19"><line x1="0.5" y1="2" x2="10.5" y2="10.5" stroke="#777" stroke-width="1.8"/>
<line x1="0.5" y1="2" x2="10.5" y2="10.5" stroke="#f4f4f4" stroke-width="0.7"/>
<line x1="11" y1="11" x2="17.3" y2="16" stroke="#c89a00" stroke-width="4" stroke-linecap="round"/>
<line x1="11" y1="11" x2="17.3" y2="16" stroke="#f2cc10" stroke-width="2.6" stroke-linecap="round"/>
<line x1="3" y1="16.5" x2="11.5" y2="8" stroke="#2a2a2a" stroke-width="3" stroke-linecap="round"/>
<circle cx="3" cy="16.5" r="0.9" fill="#fff"/>
<circle cx="14.6" cy="4.6" r="3.8" fill="#c8c8c8" stroke="#6a6a6a" stroke-width="0.8"/>
<path d="M14.6 4.6 L18.5 0.2 L19 5 Z" fill="#fff"/>
<circle cx="14.6" cy="4.6" r="1.3" fill="#fff"/></svg>
<div class="tr" style="left:65px;top:471px;transform:scaleX(1.0728);transform-origin:0 0;letter-spacing:0px;">Assets - Search Words [4]</div>
<svg style="left:42px;top:487px" width="19" height="19"><line x1="0.5" y1="2" x2="10.5" y2="10.5" stroke="#777" stroke-width="1.8"/>
<line x1="0.5" y1="2" x2="10.5" y2="10.5" stroke="#f4f4f4" stroke-width="0.7"/>
<line x1="11" y1="11" x2="17.3" y2="16" stroke="#c89a00" stroke-width="4" stroke-linecap="round"/>
<line x1="11" y1="11" x2="17.3" y2="16" stroke="#f2cc10" stroke-width="2.6" stroke-linecap="round"/>
<line x1="3" y1="16.5" x2="11.5" y2="8" stroke="#2a2a2a" stroke-width="3" stroke-linecap="round"/>
<circle cx="3" cy="16.5" r="0.9" fill="#fff"/>
<circle cx="14.6" cy="4.6" r="3.8" fill="#c8c8c8" stroke="#6a6a6a" stroke-width="0.8"/>
<path d="M14.6 4.6 L18.5 0.2 L19 5 Z" fill="#fff"/>
<circle cx="14.6" cy="4.6" r="1.3" fill="#fff"/></svg>
<div class="tr" style="left:65px;top:490px;transform:scaleX(1.0728);transform-origin:0 0;letter-spacing:0px;">Assets - Search Words [5]</div>
<svg style="left:42px;top:506px" width="19" height="19"><line x1="0.5" y1="2" x2="10.5" y2="10.5" stroke="#777" stroke-width="1.8"/>
<line x1="0.5" y1="2" x2="10.5" y2="10.5" stroke="#f4f4f4" stroke-width="0.7"/>
<line x1="11" y1="11" x2="17.3" y2="16" stroke="#c89a00" stroke-width="4" stroke-linecap="round"/>
<line x1="11" y1="11" x2="17.3" y2="16" stroke="#f2cc10" stroke-width="2.6" stroke-linecap="round"/>
<line x1="3" y1="16.5" x2="11.5" y2="8" stroke="#2a2a2a" stroke-width="3" stroke-linecap="round"/>
<circle cx="3" cy="16.5" r="0.9" fill="#fff"/>
<circle cx="14.6" cy="4.6" r="3.8" fill="#c8c8c8" stroke="#6a6a6a" stroke-width="0.8"/>
<path d="M14.6 4.6 L18.5 0.2 L19 5 Z" fill="#fff"/>
<circle cx="14.6" cy="4.6" r="1.3" fill="#fff"/></svg>
<div class="tr" style="left:65px;top:509px;transform:scaleX(1.0456);transform-origin:0 0;letter-spacing:0px;">HTTP - Cache Manager</div>
<svg style="left:42px;top:525px" width="19" height="19"><line x1="0.5" y1="2" x2="10.5" y2="10.5" stroke="#777" stroke-width="1.8"/>
<line x1="0.5" y1="2" x2="10.5" y2="10.5" stroke="#f4f4f4" stroke-width="0.7"/>
<line x1="11" y1="11" x2="17.3" y2="16" stroke="#c89a00" stroke-width="4" stroke-linecap="round"/>
<line x1="11" y1="11" x2="17.3" y2="16" stroke="#f2cc10" stroke-width="2.6" stroke-linecap="round"/>
<line x1="3" y1="16.5" x2="11.5" y2="8" stroke="#2a2a2a" stroke-width="3" stroke-linecap="round"/>
<circle cx="3" cy="16.5" r="0.9" fill="#fff"/>
<circle cx="14.6" cy="4.6" r="3.8" fill="#c8c8c8" stroke="#6a6a6a" stroke-width="0.8"/>
<path d="M14.6 4.6 L18.5 0.2 L19 5 Z" fill="#fff"/>
<circle cx="14.6" cy="4.6" r="1.3" fill="#fff"/></svg>
<div class="tr" style="left:65px;top:528px;transform:scaleX(1.0455);transform-origin:0 0;letter-spacing:0px;">HTTP - Cookie Manager</div>
<svg style="left:42px;top:544px" width="19" height="19"><line x1="0.5" y1="2" x2="10.5" y2="10.5" stroke="#777" stroke-width="1.8"/>
<line x1="0.5" y1="2" x2="10.5" y2="10.5" stroke="#f4f4f4" stroke-width="0.7"/>
<line x1="11" y1="11" x2="17.3" y2="16" stroke="#c89a00" stroke-width="4" stroke-linecap="round"/>
<line x1="11" y1="11" x2="17.3" y2="16" stroke="#f2cc10" stroke-width="2.6" stroke-linecap="round"/>
<line x1="3" y1="16.5" x2="11.5" y2="8" stroke="#2a2a2a" stroke-width="3" stroke-linecap="round"/>
<circle cx="3" cy="16.5" r="0.9" fill="#fff"/>
<circle cx="14.6" cy="4.6" r="3.8" fill="#c8c8c8" stroke="#6a6a6a" stroke-width="0.8"/>
<path d="M14.6 4.6 L18.5 0.2 L19 5 Z" fill="#fff"/>
<circle cx="14.6" cy="4.6" r="1.3" fill="#fff"/></svg>
<div class="tr" style="left:65px;top:547px;transform:scaleX(1.0453);transform-origin:0 0;letter-spacing:0px;">HTTP - Header Manager</div>
<svg style="left:42px;top:563px" width="19" height="19"><line x1="0.5" y1="2" x2="10.5" y2="10.5" stroke="#777" stroke-width="1.8"/>
<line x1="0.5" y1="2" x2="10.5" y2="10.5" stroke="#f4f4f4" stroke-width="0.7"/>
<line x1="11" y1="11" x2="17.3" y2="16" stroke="#c89a00" stroke-width="4" stroke-linecap="round"/>
<line x1="11" y1="11" x2="17.3" y2="16" stroke="#f2cc10" stroke-width="2.6" stroke-linecap="round"/>
<line x1="3" y1="16.5" x2="11.5" y2="8" stroke="#2a2a2a" stroke-width="3" stroke-linecap="round"/>
<circle cx="3" cy="16.5" r="0.9" fill="#fff"/>
<circle cx="14.6" cy="4.6" r="3.8" fill="#c8c8c8" stroke="#6a6a6a" stroke-width="0.8"/>
<path d="M14.6 4.6 L18.5 0.2 L19 5 Z" fill="#fff"/>
<circle cx="14.6" cy="4.6" r="1.3" fill="#fff"/></svg>
<div class="tr" style="left:65px;top:566px;transform:scaleX(1.0452);transform-origin:0 0;letter-spacing:0px;">HTTP - Request Defaults</div>
<svg style="left:25px;top:587px" width="14" height="9"><circle cx="4.7" cy="4.6" r="2.15" fill="#fff" stroke="#6382bf" stroke-width="1.5"/><rect x="6.5" y="3.8" width="5.5" height="1.5" fill="#6382bf"/><rect x="12" y="4" width="1" height="1" fill="#b8cfe5"/></svg>
<svg style="left:42px;top:582px" width="19" height="19"><rect x="0.5" y="1.5" width="18" height="16" rx="1" fill="#d6d6d6"/>
<rect x="4" y="6" width="1" height="9" fill="#c4c4c4"/><rect x="6.5" y="6.5" width="3" height="3" fill="#c8c8c8"/><rect x="6.5" y="11" width="3" height="3" fill="#c8c8c8"/></svg>
<div class="trd" style="left:65px;top:585px;transform:scaleX(1.0957);transform-origin:0 0;letter-spacing:0px;">Components</div>
<svg style="left:25px;top:606px" width="14" height="9"><circle cx="4.7" cy="4.6" r="2.15" fill="#fff" stroke="#6382bf" stroke-width="1.5"/><rect x="6.5" y="3.8" width="5.5" height="1.5" fill="#6382bf"/><rect x="12" y="4" width="1" height="1" fill="#b8cfe5"/></svg>
<svg style="left:42px;top:601px" width="19" height="19"><defs><linearGradient id="gg" x1="0" y1="0" x2="1" y2="1"><stop offset="0" stop-color="#f6f6f6"/><stop offset="1" stop-color="#cfcfcf"/></linearGradient><linearGradient id="bg2" x1="0" y1="0" x2="1" y2="1"><stop offset="0" stop-color="#7ea2d8"/><stop offset="0.5" stop-color="#1f4f96"/><stop offset="1" stop-color="#0a2a68"/></linearGradient></defs>
<path d="M7.70 2.74 L7.69 0.07 L11.31 0.07 L11.30 2.74 L13.01 3.44 L14.88 1.55 L17.45 4.12 L15.56 5.99 L16.26 7.70 L18.93 7.69 L18.93 11.31 L16.26 11.30 L15.56 13.01 L17.45 14.88 L14.88 17.45 L13.01 15.56 L11.30 16.26 L11.31 18.93 L7.69 18.93 L7.70 16.26 L5.99 15.56 L4.12 17.45 L1.55 14.88 L3.44 13.01 L2.74 11.30 L0.07 11.31 L0.07 7.69 L2.74 7.70 L3.44 5.99 L1.55 4.12 L4.12 1.55 L5.99 3.44 Z" fill="url(#gg)" stroke="#8f8f8f" stroke-width="0.9"/>
<circle cx="9.5" cy="9.5" r="4.9" fill="url(#bg2)"/>
<path d="M8 6.8 L12.6 9.6 L8 12.4 Z" fill="#e8ecf4"/></svg>
<div class="tr" style="left:65px;top:604px;transform:scaleX(1.0642);transform-origin:0 0;letter-spacing:0px;">BasicThreadGroup-1</div>
<svg style="left:25px;top:625px" width="14" height="9"><circle cx="4.7" cy="4.6" r="2.15" fill="#fff" stroke="#6382bf" stroke-width="1.5"/><rect x="6.5" y="3.8" width="5.5" height="1.5" fill="#6382bf"/><rect x="12" y="4" width="1" height="1" fill="#b8cfe5"/></svg>
<svg style="left:42px;top:620px" width="19" height="19"><defs><linearGradient id="gg" x1="0" y1="0" x2="1" y2="1"><stop offset="0" stop-color="#f6f6f6"/><stop offset="1" stop-color="#cfcfcf"/></linearGradient><linearGradient id="bg2" x1="0" y1="0" x2="1" y2="1"><stop offset="0" stop-color="#7ea2d8"/><stop offset="0.5" stop-color="#1f4f96"/><stop offset="1" stop-color="#0a2a68"/></linearGradient></defs>
<path d="M7.70 2.74 L7.69 0.07 L11.31 0.07 L11.30 2.74 L13.01 3.44 L14.88 1.55 L17.45 4.12 L15.56 5.99 L16.26 7.70 L18.93 7.69 L18.93 11.31 L16.26 11.30 L15.56 13.01 L17.45 14.88 L14.88 17.45 L13.01 15.56 L11.30 16.26 L11.31 18.93 L7.69 18.93 L7.70 16.26 L5.99 15.56 L4.12 17.45 L1.55 14.88 L3.44 13.01 L2.74 11.30 L0.07 11.31 L0.07 7.69 L2.74 7.70 L3.44 5.99 L1.55 4.12 L4.12 1.55 L5.99 3.44 Z" fill="url(#gg)" stroke="#8f8f8f" stroke-width="0.9"/>
<circle cx="9.5" cy="9.5" r="4.9" fill="url(#bg2)"/>
<path d="M8 6.8 L12.6 9.6 L8 12.4 Z" fill="#e8ecf4"/></svg>
<div class="tr" style="left:65px;top:623px;transform:scaleX(1.0642);transform-origin:0 0;letter-spacing:0px;">BasicThreadGroup-2</div>
<svg style="left:25px;top:644px" width="14" height="9"><circle cx="4.7" cy="4.6" r="2.15" fill="#fff" stroke="#6382bf" stroke-width="1.5"/><rect x="6.5" y="3.8" width="5.5" height="1.5" fill="#6382bf"/><rect x="12" y="4" width="1" height="1" fill="#b8cfe5"/></svg>
<svg style="left:42px;top:639px" width="19" height="19"><defs><linearGradient id="gg" x1="0" y1="0" x2="1" y2="1"><stop offset="0" stop-color="#f6f6f6"/><stop offset="1" stop-color="#cfcfcf"/></linearGradient><linearGradient id="bg2" x1="0" y1="0" x2="1" y2="1"><stop offset="0" stop-color="#7ea2d8"/><stop offset="0.5" stop-color="#1f4f96"/><stop offset="1" stop-color="#0a2a68"/></linearGradient></defs>
<path d="M7.70 2.74 L7.69 0.07 L11.31 0.07 L11.30 2.74 L13.01 3.44 L14.88 1.55 L17.45 4.12 L15.56 5.99 L16.26 7.70 L18.93 7.69 L18.93 11.31 L16.26 11.30 L15.56 13.01 L17.45 14.88 L14.88 17.45 L13.01 15.56 L11.30 16.26 L11.31 18.93 L7.69 18.93 L7.70 16.26 L5.99 15.56 L4.12 17.45 L1.55 14.88 L3.44 13.01 L2.74 11.30 L0.07 11.31 L0.07 7.69 L2.74 7.70 L3.44 5.99 L1.55 4.12 L4.12 1.55 L5.99 3.44 Z" fill="url(#gg)" stroke="#8f8f8f" stroke-width="0.9"/>
<circle cx="9.5" cy="9.5" r="4.9" fill="url(#bg2)"/>
<path d="M8 6.8 L12.6 9.6 L8 12.4 Z" fill="#e8ecf4"/></svg>
<div class="tr" style="left:65px;top:642px;transform:scaleX(1.0642);transform-origin:0 0;letter-spacing:0px;">BasicThreadGroup-3</div>
<svg style="left:25px;top:663px" width="14" height="9"><circle cx="4.7" cy="4.6" r="2.15" fill="#fff" stroke="#6382bf" stroke-width="1.5"/><rect x="6.5" y="3.8" width="5.5" height="1.5" fill="#6382bf"/><rect x="12" y="4" width="1" height="1" fill="#b8cfe5"/></svg>
<svg style="left:42px;top:658px" width="19" height="19"><defs><linearGradient id="gg" x1="0" y1="0" x2="1" y2="1"><stop offset="0" stop-color="#f6f6f6"/><stop offset="1" stop-color="#cfcfcf"/></linearGradient><linearGradient id="bg2" x1="0" y1="0" x2="1" y2="1"><stop offset="0" stop-color="#7ea2d8"/><stop offset="0.5" stop-color="#1f4f96"/><stop offset="1" stop-color="#0a2a68"/></linearGradient></defs>
<path d="M7.70 2.74 L7.69 0.07 L11.31 0.07 L11.30 2.74 L13.01 3.44 L14.88 1.55 L17.45 4.12 L15.56 5.99 L16.26 7.70 L18.93 7.69 L18.93 11.31 L16.26 11.30 L15.56 13.01 L17.45 14.88 L14.88 17.45 L13.01 15.56 L11.30 16.26 L11.31 18.93 L7.69 18.93 L7.70 16.26 L5.99 15.56 L4.12 17.45 L1.55 14.88 L3.44 13.01 L2.74 11.30 L0.07 11.31 L0.07 7.69 L2.74 7.70 L3.44 5.99 L1.55 4.12 L4.12 1.55 L5.99 3.44 Z" fill="url(#gg)" stroke="#8f8f8f" stroke-width="0.9"/>
<circle cx="9.5" cy="9.5" r="4.9" fill="url(#bg2)"/>
<path d="M8 6.8 L12.6 9.6 L8 12.4 Z" fill="#e8ecf4"/></svg>
<div class="tr" style="left:65px;top:661px;transform:scaleX(1.0642);transform-origin:0 0;letter-spacing:0px;">BasicThreadGroup-4</div>
<svg style="left:25px;top:682px" width="14" height="9"><circle cx="4.7" cy="4.6" r="2.15" fill="#fff" stroke="#6382bf" stroke-width="1.5"/><rect x="6.5" y="3.8" width="5.5" height="1.5" fill="#6382bf"/><rect x="12" y="4" width="1" height="1" fill="#b8cfe5"/></svg>
<svg style="left:42px;top:677px" width="19" height="19"><defs><linearGradient id="gg" x1="0" y1="0" x2="1" y2="1"><stop offset="0" stop-color="#f6f6f6"/><stop offset="1" stop-color="#cfcfcf"/></linearGradient><linearGradient id="bg2" x1="0" y1="0" x2="1" y2="1"><stop offset="0" stop-color="#7ea2d8"/><stop offset="0.5" stop-color="#1f4f96"/><stop offset="1" stop-color="#0a2a68"/></linearGradient></defs>
<path d="M7.70 2.74 L7.69 0.07 L11.31 0.07 L11.30 2.74 L13.01 3.44 L14.88 1.55 L17.45 4.12 L15.56 5.99 L16.26 7.70 L18.93 7.69 L18.93 11.31 L16.26 11.30 L15.56 13.01 L17.45 14.88 L14.88 17.45 L13.01 15.56 L11.30 16.26 L11.31 18.93 L7.69 18.93 L7.70 16.26 L5.99 15.56 L4.12 17.45 L1.55 14.88 L3.44 13.01 L2.74 11.30 L0.07 11.31 L0.07 7.69 L2.74 7.70 L3.44 5.99 L1.55 4.12 L4.12 1.55 L5.99 3.44 Z" fill="url(#gg)" stroke="#8f8f8f" stroke-width="0.9"/>
<circle cx="9.5" cy="9.5" r="4.9" fill="url(#bg2)"/>
<path d="M8 6.8 L12.6 9.6 L8 12.4 Z" fill="#e8ecf4"/></svg>
<div class="tr" style="left:65px;top:680px;transform:scaleX(1.0642);transform-origin:0 0;letter-spacing:0px;">BasicThreadGroup-5</div>
<svg style="left:25px;top:701px" width="14" height="9"><circle cx="4.7" cy="4.6" r="2.15" fill="#fff" stroke="#6382bf" stroke-width="1.5"/><rect x="6.5" y="3.8" width="5.5" height="1.5" fill="#6382bf"/><rect x="12" y="4" width="1" height="1" fill="#b8cfe5"/></svg>
<svg style="left:42px;top:696px" width="19" height="19"><path d="M7.70 2.74 L7.69 0.07 L11.31 0.07 L11.30 2.74 L13.01 3.44 L14.88 1.55 L17.45 4.12 L15.56 5.99 L16.26 7.70 L18.93 7.69 L18.93 11.31 L16.26 11.30 L15.56 13.01 L17.45 14.88 L14.88 17.45 L13.01 15.56 L11.30 16.26 L11.31 18.93 L7.69 18.93 L7.70 16.26 L5.99 15.56 L4.12 17.45 L1.55 14.88 L3.44 13.01 L2.74 11.30 L0.07 11.31 L0.07 7.69 L2.74 7.70 L3.44 5.99 L1.55 4.12 L4.12 1.55 L5.99 3.44 Z" fill="#e2e2e2" stroke="#cdcdcd" stroke-width="0.9"/>
<circle cx="9.5" cy="9.5" r="4.9" fill="#d4d4d4"/></svg>
<div class="trd" style="left:65px;top:699px;transform:scaleX(1.0642);transform-origin:0 0;letter-spacing:0px;">BasicThreadGroup-6</div>
<svg style="left:25px;top:720px" width="14" height="9"><circle cx="4.7" cy="4.6" r="2.15" fill="#fff" stroke="#6382bf" stroke-width="1.5"/><rect x="6.5" y="3.8" width="5.5" height="1.5" fill="#6382bf"/><rect x="12" y="4" width="1" height="1" fill="#b8cfe5"/></svg>
<svg style="left:42px;top:715px" width="19" height="19"><path d="M7.70 2.74 L7.69 0.07 L11.31 0.07 L11.30 2.74 L13.01 3.44 L14.88 1.55 L17.45 4.12 L15.56 5.99 L16.26 7.70 L18.93 7.69 L18.93 11.31 L16.26 11.30 L15.56 13.01 L17.45 14.88 L14.88 17.45 L13.01 15.56 L11.30 16.26 L11.31 18.93 L7.69 18.93 L7.70 16.26 L5.99 15.56 L4.12 17.45 L1.55 14.88 L3.44 13.01 L2.74 11.30 L0.07 11.31 L0.07 7.69 L2.74 7.70 L3.44 5.99 L1.55 4.12 L4.12 1.55 L5.99 3.44 Z" fill="#e2e2e2" stroke="#cdcdcd" stroke-width="0.9"/>
<circle cx="9.5" cy="9.5" r="4.9" fill="#d4d4d4"/></svg>
<div class="trd" style="left:65px;top:718px;transform:scaleX(1.0642);transform-origin:0 0;letter-spacing:0px;">BasicThreadGroup-7</div>
<svg style="left:25px;top:739px" width="14" height="9"><circle cx="4.7" cy="4.6" r="2.15" fill="#fff" stroke="#6382bf" stroke-width="1.5"/><rect x="6.5" y="3.8" width="5.5" height="1.5" fill="#6382bf"/><rect x="12" y="4" width="1" height="1" fill="#b8cfe5"/></svg>
<svg style="left:42px;top:734px" width="19" height="19"><path d="M7.70 2.74 L7.69 0.07 L11.31 0.07 L11.30 2.74 L13.01 3.44 L14.88 1.55 L17.45 4.12 L15.56 5.99 L16.26 7.70 L18.93 7.69 L18.93 11.31 L16.26 11.30 L15.56 13.01 L17.45 14.88 L14.88 17.45 L13.01 15.56 L11.30 16.26 L11.31 18.93 L7.69 18.93 L7.70 16.26 L5.99 15.56 L4.12 17.45 L1.55 14.88 L3.44 13.01 L2.74 11.30 L0.07 11.31 L0.07 7.69 L2.74 7.70 L3.44 5.99 L1.55 4.12 L4.12 1.55 L5.99 3.44 Z" fill="#e2e2e2" stroke="#cdcdcd" stroke-width="0.9"/>
<circle cx="9.5" cy="9.5" r="4.9" fill="#d4d4d4"/></svg>
<div class="trd" style="left:65px;top:737px;transform:scaleX(1.0642);transform-origin:0 0;letter-spacing:0px;">BasicThreadGroup-8</div>
<svg style="left:25px;top:758px" width="14" height="9"><circle cx="4.7" cy="4.6" r="2.15" fill="#fff" stroke="#6382bf" stroke-width="1.5"/><rect x="6.5" y="3.8" width="5.5" height="1.5" fill="#6382bf"/><rect x="12" y="4" width="1" height="1" fill="#b8cfe5"/></svg>
<svg style="left:42px;top:753px" width="19" height="19"><path d="M7.70 2.74 L7.69 0.07 L11.31 0.07 L11.30 2.74 L13.01 3.44 L14.88 1.55 L17.45 4.12 L15.56 5.99 L16.26 7.70 L18.93 7.69 L18.93 11.31 L16.26 11.30 L15.56 13.01 L17.45 14.88 L14.88 17.45 L13.01 15.56 L11.30 16.26 L11.31 18.93 L7.69 18.93 L7.70 16.26 L5.99 15.56 L4.12 17.45 L1.55 14.88 L3.44 13.01 L2.74 11.30 L0.07 11.31 L0.07 7.69 L2.74 7.70 L3.44 5.99 L1.55 4.12 L4.12 1.55 L5.99 3.44 Z" fill="#e2e2e2" stroke="#cdcdcd" stroke-width="0.9"/>
<circle cx="9.5" cy="9.5" r="4.9" fill="#d4d4d4"/></svg>
<div class="trd" style="left:65px;top:756px;transform:scaleX(1.0642);transform-origin:0 0;letter-spacing:0px;">BasicThreadGroup-9</div>
<svg style="left:42px;top:772px" width="19" height="19"><path d="M1.5 2 V17.5 H17.5" fill="none" stroke="#dadada" stroke-width="1"/>
<path d="M0.5 5 H1.5 M0.5 8 H1.5 M0.5 11 H1.5 M0.5 14 H1.5" stroke="#dcdcdc" stroke-width="0.8"/>
<path d="M12 17 V9.5 L13.5 7 L15 6.2 L17.5 6 V17 Z" fill="#d2d2d2"/>
<path d="M3.5 17 V13.5 L8 10.2 L12 14.5 L14.5 16 L17.5 13.5 V17 Z" fill="#cdcdcd"/></svg>
<div class="trd" style="left:65px;top:775px;transform:scaleX(1.0481);transform-origin:0 0;letter-spacing:0px;">View Results Tree</div>
<svg style="left:42px;top:791px" width="19" height="19"><path d="M1.5 2 V17.5 H17.5" fill="none" stroke="#dadada" stroke-width="1"/>
<path d="M0.5 5 H1.5 M0.5 8 H1.5 M0.5 11 H1.5 M0.5 14 H1.5" stroke="#dcdcdc" stroke-width="0.8"/>
<path d="M12 17 V9.5 L13.5 7 L15 6.2 L17.5 6 V17 Z" fill="#d2d2d2"/>
<path d="M3.5 17 V13.5 L8 10.2 L12 14.5 L14.5 16 L17.5 13.5 V17 Z" fill="#cdcdcd"/></svg>
<div class="trd" style="left:65px;top:794px;transform:scaleX(1.0915);transform-origin:0 0;letter-spacing:0px;">Summary Report</div>
<svg style="left:42px;top:810px" width="19" height="19"><path d="M1.5 2 V17.5 H17.5" fill="none" stroke="#dadada" stroke-width="1"/>
<path d="M0.5 5 H1.5 M0.5 8 H1.5 M0.5 11 H1.5 M0.5 14 H1.5" stroke="#dcdcdc" stroke-width="0.8"/>
<path d="M12 17 V9.5 L13.5 7 L15 6.2 L17.5 6 V17 Z" fill="#d2d2d2"/>
<path d="M3.5 17 V13.5 L8 10.2 L12 14.5 L14.5 16 L17.5 13.5 V17 Z" fill="#cdcdcd"/></svg>
<div class="trd" style="left:65px;top:813px;transform:scaleX(1.0997);transform-origin:0 0;letter-spacing:0px;">Aggregate Report</div>
<svg style="left:23px;top:829px" width="18" height="16"><path d="M2.4 15 V4 Q2.4 1.6 6 1.4 L12.5 1.4 Q15.8 1.6 15.8 4 V15 Z" fill="#ececec"/>
<path d="M2.4 15 V4 Q2.4 1.6 6 1.4 L12.5 1.4 Q15.8 1.6 15.8 4 V15" fill="none" stroke="#111" stroke-width="1.5"/>
<path d="M2.4 4 Q4 1.8 9 1.5 Q14 1.8 15.8 4" fill="none" stroke="#555" stroke-width="1"/>
<path d="M6 4 H11 M6 6 H11 M8 10 H11" stroke="#c8c8c8" stroke-width="0.6"/>
<path d="M12 4 L13 5 L14.5 3.5 M12 9 L13 10 L14.5 8.5 M12 13 L13 14 L14.5 12.5" fill="none" stroke="#6a9ad8" stroke-width="0.9"/>
<path d="M0.6 1.6 L10.5 14.5" stroke="#1a1a1a" stroke-width="1.7" stroke-linecap="round"/>
<path d="M9.3 13 L10.9 15" stroke="#b8862a" stroke-width="1.5"/></svg>
<div class="tr" style="left:45px;top:832px;transform:scaleX(1.0859);transform-origin:0 0;letter-spacing:0px;">WorkBench</div>
</div></div>
<div class="ttl" style="left:534px;top:89.6px;">Summary Report</div>
<div style="left:534px;top:113px;width:1031px;height:42px;border:1px solid #999;box-shadow:inset 1px 1px 0 #fff, 1px 1px 0 #fff"></div>
<div class="b" style="left:535.30px;top:118px;letter-spacing:0;transform:scaleX(1.1316);transform-origin:0 0">Name:</div>
<div style="left:586px;top:115px;width:977px;height:18px;background:#fff;border:1px solid #7a8a99"></div>
<div style="left:586px;top:133px;width:977px;height:1px;background:#fff"></div>
<div class="tc" style="left:587.60px;top:118px;letter-spacing:0;transform:scaleX(1.0433);transform-origin:0 0">Summary Report</div>
<div class="b" style="left:535.30px;top:140px;letter-spacing:0;transform:scaleX(1.1029);transform-origin:0 0">Comments:</div>
<div style="left:615px;top:139px;width:948px;height:15px;background:#fff"></div>
<div style="left:536px;top:168px;width:1028px;height:38px;border:1px solid #b8cfe5"></div>
<div style="left:540px;top:162px;width:252px;height:10px;background:#eeeeee"></div>
<div class="b" style="left:541.80px;top:162px;letter-spacing:0;transform:scaleX(1.159);transform-origin:0 0">Write results to file / Read from file</div>
<div class="b" style="left:538.30px;top:184px;letter-spacing:0;transform:scaleX(1.1611);transform-origin:0 0">Filename</div>
<div style="left:608px;top:178px;width:455px;height:24px;background:#fff;border:1px solid #7a8a99;border-right:1px solid #7a8a99"></div>
<div class="tc" style="left:609.20px;top:184px;letter-spacing:0;transform:scaleX(1.0814);transform-origin:0 0">/var/www/html/jmeter/var/log/result.csv</div>
<div class="grad" style="left:1069px;top:179px;width:79px;height:23px;border:1px solid #7a8a99"></div>
<div class="sm" style="left:1086px;top:185.9px;letter-spacing:0.35px;">Browse...</div>
<div class="b" style="left:1151.80px;top:184px;letter-spacing:0;transform:scaleX(1.1119);transform-origin:0 0">Log/Display Only:</div>
<div class="grad" style="left:1285px;top:184px;width:13px;height:13px;border:1px solid #7a8a99"></div>
<div class="b" style="left:1301.30px;top:184px;letter-spacing:0;transform:scaleX(1.1216);transform-origin:0 0">Errors</div>
<div class="grad" style="left:1358px;top:184px;width:13px;height:13px;border:1px solid #7a8a99"></div>
<div class="b" style="left:1374.30px;top:184px;letter-spacing:0;transform:scaleX(1.12);transform-origin:0 0">Successes</div>
<div class="grad" style="left:1458px;top:178px;width:103px;height:25px;border:1px solid #7a8a99"></div>
<div class="b" style="left:1474.30px;top:184px;letter-spacing:0;transform:scaleX(1.1407);transform-origin:0 0">Configure</div>
<div style="left:524px;top:213px;width:1051px;height:595px;border-top:1px solid #7a8a99;border-left:1px solid #7a8a99;border-bottom:1px solid #7a8a99;border-right:2px solid #7a8a99"></div>
<div style="left:525px;top:214px;width:1048px;height:18px;background:#eeeeee"></div>
<div style="left:525px;top:232px;width:1048px;height:1px;background:#7a8a99"></div>
<div style="left:525px;top:233px;width:1048px;height:160px;background:#ffffff"></div>
<div style="left:525px;top:248px;width:1048px;height:1px;background:#7a8a99"></div>
<div style="left:525px;top:264px;width:1048px;height:1px;background:#7a8a99"></div>
<div style="left:525px;top:280px;width:1048px;height:1px;background:#7a8a99"></div>
<div style="left:525px;top:296px;width:1048px;height:1px;background:#7a8a99"></div>
<div style="left:525px;top:312px;width:1048px;height:1px;background:#7a8a99"></div>
<div style="left:525px;top:328px;width:1048px;height:1px;background:#7a8a99"></div>
<div style="left:525px;top:344px;width:1048px;height:1px;background:#7a8a99"></div>
<div style="left:525px;top:360px;width:1048px;height:1px;background:#7a8a99"></div>
<div style="left:525px;top:376px;width:1048px;height:1px;background:#7a8a99"></div>
<div style="left:525px;top:392px;width:1048px;height:1px;background:#7a8a99"></div>
<div style="left:749px;top:214px;width:1px;height:179px;background:#7a8a99"></div>
<div style="left:838px;top:214px;width:1px;height:179px;background:#7a8a99"></div>
<div style="left:929px;top:214px;width:1px;height:179px;background:#7a8a99"></div>
<div style="left:1020px;top:214px;width:1px;height:179px;background:#7a8a99"></div>
<div style="left:1111px;top:214px;width:1px;height:179px;background:#7a8a99"></div>
<div style="left:1192px;top:214px;width:1px;height:179px;background:#7a8a99"></div>
<div style="left:1283px;top:214px;width:1px;height:179px;background:#7a8a99"></div>
<div style="left:1356px;top:214px;width:1px;height:179px;background:#7a8a99"></div>
<div style="left:1433px;top:214px;width:1px;height:179px;background:#7a8a99"></div>
<div style="left:1503px;top:214px;width:1px;height:179px;background:#7a8a99"></div>
<div style="left:525px;top:214px;width:224px;height:1px;background:#ffffff"></div>
<div style="left:525px;top:214px;width:1px;height:18px;background:#ffffff"></div>
<div class="tc" style="left:525px;top:217px;width:224px;text-align:center;letter-spacing:0;transform:scaleX(1.0667);transform-origin:50% 0">Label</div>
<div style="left:750px;top:214px;width:88px;height:1px;background:#ffffff"></div>
<div style="left:750px;top:214px;width:1px;height:18px;background:#ffffff"></div>
<div class="tc" style="left:750px;top:217px;width:88px;text-align:center;letter-spacing:0;transform:scaleX(1.0833);transform-origin:50% 0"># Samples</div>
<div style="left:839px;top:214px;width:90px;height:1px;background:#ffffff"></div>
<div style="left:839px;top:214px;width:1px;height:18px;background:#ffffff"></div>
<div class="tc" style="left:839px;top:217px;width:90px;text-align:center;letter-spacing:0;transform:scaleX(1.0652);transform-origin:50% 0">Average</div>
<div style="left:930px;top:214px;width:90px;height:1px;background:#ffffff"></div>
<div style="left:930px;top:214px;width:1px;height:18px;background:#ffffff"></div>
<div class="tc" style="left:930px;top:217px;width:90px;text-align:center;letter-spacing:0;transform:scaleX(1.1053);transform-origin:50% 0">Min</div>
<div style="left:1021px;top:214px;width:90px;height:1px;background:#ffffff"></div>
<div style="left:1021px;top:214px;width:1px;height:18px;background:#ffffff"></div>
<div class="tc" style="left:1021px;top:217px;width:90px;text-align:center;letter-spacing:0;transform:scaleX(1.087);transform-origin:50% 0">Max</div>
<div style="left:1112px;top:214px;width:80px;height:1px;background:#ffffff"></div>
<div style="left:1112px;top:214px;width:1px;height:18px;background:#ffffff"></div>
<div class="tc" style="left:1112px;top:217px;width:80px;text-align:center;letter-spacing:0;transform:scaleX(1.0588);transform-origin:50% 0">Std. Dev.</div>
<div style="left:1193px;top:214px;width:90px;height:1px;background:#ffffff"></div>
<div style="left:1193px;top:214px;width:1px;height:18px;background:#ffffff"></div>
<div class="tc" style="left:1193px;top:217px;width:90px;text-align:center;letter-spacing:0;transform:scaleX(1.0233);transform-origin:50% 0">Error %</div>
<div style="left:1284px;top:214px;width:72px;height:1px;background:#ffffff"></div>
<div style="left:1284px;top:214px;width:1px;height:18px;background:#ffffff"></div>
<div class="tc" style="left:1284px;top:217px;width:72px;text-align:center;letter-spacing:0;transform:scaleX(1.0877);transform-origin:50% 0">Through...</div>
<div style="left:1357px;top:214px;width:76px;height:1px;background:#ffffff"></div>
<div style="left:1357px;top:214px;width:1px;height:18px;background:#ffffff"></div>
<div class="tc" style="left:1357px;top:217px;width:76px;text-align:center;letter-spacing:0;transform:scaleX(1.0448);transform-origin:50% 0">Received ...</div>
<div style="left:1434px;top:214px;width:69px;height:1px;background:#ffffff"></div>
<div style="left:1434px;top:214px;width:1px;height:18px;background:#ffffff"></div>
<div class="tc" style="left:1434px;top:217px;width:69px;text-align:center;letter-spacing:0;transform:scaleX(1.05);transform-origin:50% 0">Sent KB/...</div>
<div style="left:1504px;top:214px;width:69px;height:1px;background:#ffffff"></div>
<div style="left:1504px;top:214px;width:1px;height:18px;background:#ffffff"></div>
<div class="tc" style="left:1504px;top:217px;width:69px;text-align:center;letter-spacing:0;transform:scaleX(1.0667);transform-origin:50% 0">Avg. Bytes</div>
<div class="tc" style="left:526px;top:234px;letter-spacing:0;transform:scaleX(1.1948);transform-origin:0 0">call: /</div>
<div class="tc" style="left:750px;top:234px;width:87px;text-align:right;letter-spacing:0;transform:scaleX(1.1746);transform-origin:100% 0">8432</div>
<div class="tc" style="left:839px;top:234px;width:89px;text-align:right;letter-spacing:0;transform:scaleX(1.08);transform-origin:100% 0">12</div>
<div class="tc" style="left:930px;top:234px;width:89px;text-align:right;letter-spacing:0;transform:scaleX(1.08);transform-origin:100% 0">3</div>
<div class="tc" style="left:1021px;top:234px;width:89px;text-align:right;letter-spacing:0;transform:scaleX(1.1764);transform-origin:100% 0">163</div>
<div class="tc" style="left:1112px;top:234px;width:79px;text-align:right;letter-spacing:0;transform:scaleX(1.1594);transform-origin:100% 0">11,97</div>
<div class="tc" style="left:1193px;top:234px;width:89px;text-align:right;letter-spacing:0;transform:scaleX(1.1107);transform-origin:100% 0">0,00%</div>
<div class="tc" style="left:1284px;top:234px;width:71px;text-align:right;letter-spacing:0;transform:scaleX(1.0869);transform-origin:100% 0">28,4/sec</div>
<div class="tc" style="left:1357px;top:234px;width:75px;text-align:right;letter-spacing:0;transform:scaleX(1.1307);transform-origin:100% 0">159,83</div>
<div class="tc" style="left:1434px;top:234px;width:68px;text-align:right;letter-spacing:0;transform:scaleX(1.1594);transform-origin:100% 0">11,73</div>
<div class="tc" style="left:1504px;top:234px;width:68px;text-align:right;letter-spacing:0;transform:scaleX(1.1307);transform-origin:100% 0">5762,7</div>
<div class="tc" style="left:526px;top:250px;letter-spacing:0;transform:scaleX(1.1065);transform-origin:0 0">call: /assets.categoreis</div>
<div class="tc" style="left:750px;top:250px;width:87px;text-align:right;letter-spacing:0;transform:scaleX(1.1434);transform-origin:100% 0">23307</div>
<div class="tc" style="left:839px;top:250px;width:89px;text-align:right;letter-spacing:0;transform:scaleX(1.08);transform-origin:100% 0">25</div>
<div class="tc" style="left:930px;top:250px;width:89px;text-align:right;letter-spacing:0;transform:scaleX(1.08);transform-origin:100% 0">0</div>
<div class="tc" style="left:1021px;top:250px;width:89px;text-align:right;letter-spacing:0;transform:scaleX(1.1746);transform-origin:100% 0">5304</div>
<div class="tc" style="left:1112px;top:250px;width:79px;text-align:right;letter-spacing:0;transform:scaleX(1.122);transform-origin:100% 0">67,62</div>
<div class="tc" style="left:1193px;top:250px;width:89px;text-align:right;letter-spacing:0;transform:scaleX(1.1434);transform-origin:100% 0">0,11%</div>
<div class="tc" style="left:1284px;top:250px;width:71px;text-align:right;letter-spacing:0;transform:scaleX(1.0869);transform-origin:100% 0">78,7/sec</div>
<div class="tc" style="left:1357px;top:250px;width:75px;text-align:right;letter-spacing:0;transform:scaleX(1.1307);transform-origin:100% 0">944,57</div>
<div class="tc" style="left:1434px;top:250px;width:68px;text-align:right;letter-spacing:0;transform:scaleX(1.1594);transform-origin:100% 0">33,11</div>
<div class="tc" style="left:1504px;top:250px;width:68px;text-align:right;letter-spacing:0;transform:scaleX(1.1367);transform-origin:100% 0">12291,8</div>
<div class="tc" style="left:526px;top:266px;letter-spacing:0;transform:scaleX(1.1284);transform-origin:0 0">call: /search</div>
<div class="tc" style="left:750px;top:266px;width:87px;text-align:right;letter-spacing:0;transform:scaleX(1.1434);transform-origin:100% 0">15773</div>
<div class="tc" style="left:839px;top:266px;width:89px;text-align:right;letter-spacing:0;transform:scaleX(1.1746);transform-origin:100% 0">1751</div>
<div class="tc" style="left:930px;top:266px;width:89px;text-align:right;letter-spacing:0;transform:scaleX(1.08);transform-origin:100% 0">0</div>
<div class="tc" style="left:1021px;top:266px;width:89px;text-align:right;letter-spacing:0;transform:scaleX(1.1746);transform-origin:100% 0">8183</div>
<div class="tc" style="left:1112px;top:266px;width:79px;text-align:right;letter-spacing:0;transform:scaleX(1.1367);transform-origin:100% 0">1059,67</div>
<div class="tc" style="left:1193px;top:266px;width:89px;text-align:right;letter-spacing:0;transform:scaleX(1.1107);transform-origin:100% 0">0,04%</div>
<div class="tc" style="left:1284px;top:266px;width:71px;text-align:right;letter-spacing:0;transform:scaleX(1.0869);transform-origin:100% 0">52,4/sec</div>
<div class="tc" style="left:1357px;top:266px;width:75px;text-align:right;letter-spacing:0;transform:scaleX(1.1307);transform-origin:100% 0">393,16</div>
<div class="tc" style="left:1434px;top:266px;width:68px;text-align:right;letter-spacing:0;transform:scaleX(1.122);transform-origin:100% 0">21,70</div>
<div class="tc" style="left:1504px;top:266px;width:68px;text-align:right;letter-spacing:0;transform:scaleX(1.1307);transform-origin:100% 0">7684,7</div>
<div class="tc" style="left:526px;top:282px;letter-spacing:0;transform:scaleX(1.155);transform-origin:0 0">call: /detail</div>
<div class="tc" style="left:750px;top:282px;width:87px;text-align:right;letter-spacing:0;transform:scaleX(1.1434);transform-origin:100% 0">22671</div>
<div class="tc" style="left:839px;top:282px;width:89px;text-align:right;letter-spacing:0;transform:scaleX(1.2);transform-origin:100% 0">1155</div>
<div class="tc" style="left:930px;top:282px;width:89px;text-align:right;letter-spacing:0;transform:scaleX(1.08);transform-origin:100% 0">9</div>
<div class="tc" style="left:1021px;top:282px;width:89px;text-align:right;letter-spacing:0;transform:scaleX(1.1434);transform-origin:100% 0">16094</div>
<div class="tc" style="left:1112px;top:282px;width:79px;text-align:right;letter-spacing:0;transform:scaleX(1.1367);transform-origin:100% 0">2461,30</div>
<div class="tc" style="left:1193px;top:282px;width:89px;text-align:right;letter-spacing:0;transform:scaleX(1.1107);transform-origin:100% 0">0,00%</div>
<div class="tc" style="left:1284px;top:282px;width:71px;text-align:right;letter-spacing:0;transform:scaleX(1.0869);transform-origin:100% 0">72,6/sec</div>
<div class="tc" style="left:1357px;top:282px;width:75px;text-align:right;letter-spacing:0;transform:scaleX(1.1307);transform-origin:100% 0">743,42</div>
<div class="tc" style="left:1434px;top:282px;width:68px;text-align:right;letter-spacing:0;transform:scaleX(1.122);transform-origin:100% 0">36,60</div>
<div class="tc" style="left:1504px;top:282px;width:68px;text-align:right;letter-spacing:0;transform:scaleX(1.1367);transform-origin:100% 0">10481,1</div>
<div class="tc" style="left:526px;top:298px;letter-spacing:0;transform:scaleX(1.1239);transform-origin:0 0">call: /checkout/addArticle</div>
<div class="tc" style="left:750px;top:298px;width:87px;text-align:right;letter-spacing:0;transform:scaleX(1.1746);transform-origin:100% 0">2075</div>
<div class="tc" style="left:839px;top:298px;width:89px;text-align:right;letter-spacing:0;transform:scaleX(1.1746);transform-origin:100% 0">4749</div>
<div class="tc" style="left:930px;top:298px;width:89px;text-align:right;letter-spacing:0;transform:scaleX(1.1764);transform-origin:100% 0">221</div>
<div class="tc" style="left:1021px;top:298px;width:89px;text-align:right;letter-spacing:0;transform:scaleX(1.1434);transform-origin:100% 0">20339</div>
<div class="tc" style="left:1112px;top:298px;width:79px;text-align:right;letter-spacing:0;transform:scaleX(1.1367);transform-origin:100% 0">2514,51</div>
<div class="tc" style="left:1193px;top:298px;width:89px;text-align:right;letter-spacing:0;transform:scaleX(1.1107);transform-origin:100% 0">0,00%</div>
<div class="tc" style="left:1284px;top:298px;width:71px;text-align:right;letter-spacing:0;transform:scaleX(1.0997);transform-origin:100% 0">6,7/sec</div>
<div class="tc" style="left:1357px;top:298px;width:75px;text-align:right;letter-spacing:0;transform:scaleX(1.122);transform-origin:100% 0">57,80</div>
<div class="tc" style="left:1434px;top:298px;width:68px;text-align:right;letter-spacing:0;transform:scaleX(1.2);transform-origin:100% 0">3,88</div>
<div class="tc" style="left:1504px;top:298px;width:68px;text-align:right;letter-spacing:0;transform:scaleX(1.1307);transform-origin:100% 0">8789,9</div>
<div class="tc" style="left:526px;top:314px;letter-spacing:0;transform:scaleX(1.1053);transform-origin:0 0">call: /register/saveRegister</div>
<div class="tc" style="left:750px;top:314px;width:87px;text-align:right;letter-spacing:0;transform:scaleX(1.1764);transform-origin:100% 0">926</div>
<div class="tc" style="left:839px;top:314px;width:89px;text-align:right;letter-spacing:0;transform:scaleX(1.1746);transform-origin:100% 0">5438</div>
<div class="tc" style="left:930px;top:314px;width:89px;text-align:right;letter-spacing:0;transform:scaleX(1.1764);transform-origin:100% 0">451</div>
<div class="tc" style="left:1021px;top:314px;width:89px;text-align:right;letter-spacing:0;transform:scaleX(1.1434);transform-origin:100% 0">16152</div>
<div class="tc" style="left:1112px;top:314px;width:79px;text-align:right;letter-spacing:0;transform:scaleX(1.1367);transform-origin:100% 0">2907,13</div>
<div class="tc" style="left:1193px;top:314px;width:89px;text-align:right;letter-spacing:0;transform:scaleX(1.1107);transform-origin:100% 0">0,00%</div>
<div class="tc" style="left:1284px;top:314px;width:71px;text-align:right;letter-spacing:0;transform:scaleX(1.0997);transform-origin:100% 0">3,0/sec</div>
<div class="tc" style="left:1357px;top:314px;width:75px;text-align:right;letter-spacing:0;transform:scaleX(1.122);transform-origin:100% 0">23,65</div>
<div class="tc" style="left:1434px;top:314px;width:68px;text-align:right;letter-spacing:0;transform:scaleX(1.2);transform-origin:100% 0">5,34</div>
<div class="tc" style="left:1504px;top:314px;width:68px;text-align:right;letter-spacing:0;transform:scaleX(1.1307);transform-origin:100% 0">8043,4</div>
<div class="tc" style="left:526px;top:330px;letter-spacing:0;transform:scaleX(1.1244);transform-origin:0 0">call: /checkout/confirm</div>
<div class="tc" style="left:750px;top:330px;width:87px;text-align:right;letter-spacing:0;transform:scaleX(1.1746);transform-origin:100% 0">1446</div>
<div class="tc" style="left:839px;top:330px;width:89px;text-align:right;letter-spacing:0;transform:scaleX(1.1746);transform-origin:100% 0">5498</div>
<div class="tc" style="left:930px;top:330px;width:89px;text-align:right;letter-spacing:0;transform:scaleX(1.1764);transform-origin:100% 0">235</div>
<div class="tc" style="left:1021px;top:330px;width:89px;text-align:right;letter-spacing:0;transform:scaleX(1.1434);transform-origin:100% 0">22829</div>
<div class="tc" style="left:1112px;top:330px;width:79px;text-align:right;letter-spacing:0;transform:scaleX(1.1367);transform-origin:100% 0">2982,46</div>
<div class="tc" style="left:1193px;top:330px;width:89px;text-align:right;letter-spacing:0;transform:scaleX(1.1107);transform-origin:100% 0">0,00%</div>
<div class="tc" style="left:1284px;top:330px;width:71px;text-align:right;letter-spacing:0;transform:scaleX(1.0997);transform-origin:100% 0">4,7/sec</div>
<div class="tc" style="left:1357px;top:330px;width:75px;text-align:right;letter-spacing:0;transform:scaleX(1.122);transform-origin:100% 0">28,74</div>
<div class="tc" style="left:1434px;top:330px;width:68px;text-align:right;letter-spacing:0;transform:scaleX(1.2);transform-origin:100% 0">2,60</div>
<div class="tc" style="left:1504px;top:330px;width:68px;text-align:right;letter-spacing:0;transform:scaleX(1.1307);transform-origin:100% 0">6306,5</div>
<div class="tc" style="left:526px;top:346px;letter-spacing:0;transform:scaleX(1.1329);transform-origin:0 0">call: /checkout/finish</div>
<div class="tc" style="left:750px;top:346px;width:87px;text-align:right;letter-spacing:0;transform:scaleX(1.1746);transform-origin:100% 0">1409</div>
<div class="tc" style="left:839px;top:346px;width:89px;text-align:right;letter-spacing:0;transform:scaleX(1.1746);transform-origin:100% 0">3428</div>
<div class="tc" style="left:930px;top:346px;width:89px;text-align:right;letter-spacing:0;transform:scaleX(1.1764);transform-origin:100% 0">170</div>
<div class="tc" style="left:1021px;top:346px;width:89px;text-align:right;letter-spacing:0;transform:scaleX(1.178);transform-origin:100% 0">11350</div>
<div class="tc" style="left:1112px;top:346px;width:79px;text-align:right;letter-spacing:0;transform:scaleX(1.1625);transform-origin:100% 0">1911,64</div>
<div class="tc" style="left:1193px;top:346px;width:89px;text-align:right;letter-spacing:0;transform:scaleX(1.1107);transform-origin:100% 0">0,00%</div>
<div class="tc" style="left:1284px;top:346px;width:71px;text-align:right;letter-spacing:0;transform:scaleX(1.0997);transform-origin:100% 0">4,7/sec</div>
<div class="tc" style="left:1357px;top:346px;width:75px;text-align:right;letter-spacing:0;transform:scaleX(1.122);transform-origin:100% 0">21,26</div>
<div class="tc" style="left:1434px;top:346px;width:68px;text-align:right;letter-spacing:0;transform:scaleX(1.2);transform-origin:100% 0">2,36</div>
<div class="tc" style="left:1504px;top:346px;width:68px;text-align:right;letter-spacing:0;transform:scaleX(1.1307);transform-origin:100% 0">4673,0</div>
<div class="tc" style="left:526px;top:362px;letter-spacing:0;transform:scaleX(1.14);transform-origin:0 0">call: /account/login</div>
<div class="tc" style="left:750px;top:362px;width:87px;text-align:right;letter-spacing:0;transform:scaleX(1.1764);transform-origin:100% 0">550</div>
<div class="tc" style="left:839px;top:362px;width:89px;text-align:right;letter-spacing:0;transform:scaleX(1.1746);transform-origin:100% 0">6328</div>
<div class="tc" style="left:930px;top:362px;width:89px;text-align:right;letter-spacing:0;transform:scaleX(1.1764);transform-origin:100% 0">424</div>
<div class="tc" style="left:1021px;top:362px;width:89px;text-align:right;letter-spacing:0;transform:scaleX(1.1434);transform-origin:100% 0">14652</div>
<div class="tc" style="left:1112px;top:362px;width:79px;text-align:right;letter-spacing:0;transform:scaleX(1.1367);transform-origin:100% 0">2940,18</div>
<div class="tc" style="left:1193px;top:362px;width:89px;text-align:right;letter-spacing:0;transform:scaleX(1.1107);transform-origin:100% 0">0,00%</div>
<div class="tc" style="left:1284px;top:362px;width:71px;text-align:right;letter-spacing:0;transform:scaleX(1.0997);transform-origin:100% 0">1,8/sec</div>
<div class="tc" style="left:1357px;top:362px;width:75px;text-align:right;letter-spacing:0;transform:scaleX(1.122);transform-origin:100% 0">14,42</div>
<div class="tc" style="left:1434px;top:362px;width:68px;text-align:right;letter-spacing:0;transform:scaleX(1.2);transform-origin:100% 0">2,20</div>
<div class="tc" style="left:1504px;top:362px;width:68px;text-align:right;letter-spacing:0;transform:scaleX(1.1307);transform-origin:100% 0">8023,0</div>
<div class="tc" style="left:526px;top:378px;letter-spacing:0;transform:scaleX(1.05);transform-origin:0 0">TOTAL</div>
<div class="tc" style="left:750px;top:378px;width:87px;text-align:right;letter-spacing:0;transform:scaleX(1.1434);transform-origin:100% 0">76589</div>
<div class="tc" style="left:839px;top:378px;width:89px;text-align:right;letter-spacing:0;transform:scaleX(1.2);transform-origin:100% 0">1118</div>
<div class="tc" style="left:930px;top:378px;width:89px;text-align:right;letter-spacing:0;transform:scaleX(1.08);transform-origin:100% 0">0</div>
<div class="tc" style="left:1021px;top:378px;width:89px;text-align:right;letter-spacing:0;transform:scaleX(1.1434);transform-origin:100% 0">22829</div>
<div class="tc" style="left:1112px;top:378px;width:79px;text-align:right;letter-spacing:0;transform:scaleX(1.1367);transform-origin:100% 0">2101,43</div>
<div class="tc" style="left:1193px;top:378px;width:89px;text-align:right;letter-spacing:0;transform:scaleX(1.1107);transform-origin:100% 0">0,04%</div>
<div class="tc" style="left:1284px;top:378px;width:71px;text-align:right;letter-spacing:0;transform:scaleX(1.0974);transform-origin:100% 0">240,7/sec</div>
<div class="tc" style="left:1357px;top:378px;width:75px;text-align:right;letter-spacing:0;transform:scaleX(1.1367);transform-origin:100% 0">2270,07</div>
<div class="tc" style="left:1434px;top:378px;width:68px;text-align:right;letter-spacing:0;transform:scaleX(1.1612);transform-origin:100% 0">113,96</div>
<div class="tc" style="left:1504px;top:378px;width:68px;text-align:right;letter-spacing:0;transform:scaleX(1.1307);transform-origin:100% 0">9658,1</div>
<div style="left:525px;top:808px;width:1051px;height:1px;background:#ffffff"></div>
<div class="grad" style="left:781px;top:820px;width:13px;height:13px;border:1px solid #7a8a99"></div>
<div class="b" style="left:796.80px;top:820px;letter-spacing:0;transform:scaleX(1.1303);transform-origin:0 0">Include group name in label?</div>
<div class="grad" style="left:1010px;top:814px;width:149px;height:25px;border:1px solid #7a8a99"></div>
<div class="b" style="left:1026.30px;top:820px;letter-spacing:0;transform:scaleX(1.1633);transform-origin:0 0">Save Table Data</div>
<div class="grad" style="left:1168px;top:820px;width:13px;height:13px;border:1px solid #7a8a99"></div>
<svg style="left:1168px;top:820px" width="13" height="13"><path d="M3 6.5 L5.5 9.5 L10 3" fill="none" stroke="#222" stroke-width="1.6"/></svg>
<div class="b" style="left:1184.30px;top:820px;letter-spacing:0;transform:scaleX(1.1717);transform-origin:0 0">Save Table Header</div>
<div style="left:1375px;top:49px;width:62px;height:19px;background:#fff;border-top:2px solid #8c8c8c;border-left:2px solid #8c8c8c"></div>
<div style="left:1378px;top:51px;font-size:13px;line-height:15px;color:#111;letter-spacing:0.9px;white-space:pre">00:00:00</div>
<div style="left:1457px;top:51px;font-weight:bold;font-size:13px;line-height:15px;color:#111">0</div>
<svg style="left:1468px;top:48px" width="22" height="20"><path d="M11 1.5 L20.8 18.8 L1.2 18.8 Z" fill="#f5c400" stroke="#3a3000" stroke-width="1.6" stroke-linejoin="round"/><rect x="10" y="6" width="2" height="7" fill="#222"/><rect x="10" y="14.5" width="2" height="2" fill="#222"/></svg>
<div style="left:1514px;top:51px;font-size:13px;line-height:15px;color:#111;letter-spacing:0.5px;white-space:pre">0 / 0</div>
<svg style="left:1553px;top:46px" width="24" height="24"><defs><radialGradient id="rg" cx="50%" cy="50%" r="60%"><stop offset="0" stop-color="#f0f0f0"/><stop offset="0.6" stop-color="#d6d6d6"/><stop offset="1" stop-color="#9a9a9a"/></radialGradient></defs><circle cx="12" cy="11.8" r="10.6" fill="url(#rg)" stroke="#7a7a7a" stroke-width="1.1"/><circle cx="12" cy="11.8" r="5.8" fill="none" stroke="#4a4a4a" stroke-width="2.4" stroke-dasharray="4.6 4.51" stroke-dashoffset="-2.25"/></svg>
<svg style="left:0;top:0" width="1580" height="850"><circle cx="191.3" cy="801.2" r="17.6" fill="none" stroke="#ff0000" stroke-width="5.6"/><path d="M186.3 795.8 Q188.5 794.6 190.6 793.2" fill="none" stroke="#ff0000" stroke-width="2.1"/><rect x="189.9" y="793" width="2.2" height="15" fill="#ff0000"/><rect x="186.3" y="807.1" width="9.3" height="1.9" fill="#ff0000"/><circle cx="889.2" cy="189.1" r="17.6" fill="none" stroke="#ff0000" stroke-width="5.6"/><path d="M883.6 183.4 Q885.8 181.3 888.6 181.3 Q892.7 181.5 892.9 185.4 Q892.9 187.9 889.6 191.3 L884.6 196" fill="none" stroke="#ff0000" stroke-width="2.0"/><rect x="883.6" y="195.1" width="9.8" height="1.9" fill="#ff0000"/></svg>
<div style="left:2px;top:40px;width:34px;height:34px;background:#eeeeee"></div><div style="left:3px;top:41px;width:33px;height:33px;border:1px solid #fff"></div><div style="left:2px;top:40px;width:33px;height:33px;border:1px solid #8c8c8c"></div><svg style="left:8px;top:46px" width="22" height="22"><defs><linearGradient id="ng" x1="0" y1="0" x2="1" y2="1"><stop offset="0" stop-color="#fdfdfd"/><stop offset="1" stop-color="#d8d8d8"/></linearGradient></defs><rect x="2.5" y="1.5" width="17.5" height="19" rx="1.5" fill="url(#ng)" stroke="#8a8a8a" stroke-width="1.1"/><circle cx="4.5" cy="7" r="0.6" fill="#fff"/><circle cx="4.5" cy="11.5" r="0.6" fill="#fff"/><circle cx="19" cy="4.5" r="2.2" fill="#fff" stroke="#f2e66a" stroke-width="1.4"/></svg><div style="left:36px;top:40px;width:34px;height:34px;background:#eeeeee"></div><div style="left:37px;top:41px;width:33px;height:33px;border:1px solid #fff"></div><div style="left:36px;top:40px;width:33px;height:33px;border:1px solid #8c8c8c"></div><svg style="left:42px;top:46px" width="22" height="22"><path d="M1.5 2 Q5 -0.5 9 1.5 L9 8 L2 9 Z" fill="#e4e6e8" stroke="#9aa2aa" stroke-width="0.7"/><path d="M9 1.5 Q13 -0.5 17 1 L17 9 L9 9 Z" fill="#e4e6e8" stroke="#9aa2aa" stroke-width="0.7"/><path d="M0 6 L7 5.5 L7.5 19 L1.5 19.5 Z" fill="#1a7fd0"/><rect x="1.5" y="8" width="2" height="2" fill="#9cc8f0"/><path d="M6 8 L19 6.5 L19 18 L7 21 Z" fill="#3cae12"/><path d="M6 8 L10 7.5 L10 20.2 L7 21 Z" fill="#7ad030"/><circle cx="8" cy="18" r="0.8" fill="#fff"/><path d="M19 14 L22 18 L13 21 Z" fill="#d4d4d4" opacity="0.7"/></svg><div style="left:70px;top:40px;width:34px;height:34px;background:#eeeeee"></div><div style="left:71px;top:41px;width:33px;height:33px;border:1px solid #fff"></div><div style="left:70px;top:40px;width:33px;height:33px;border:1px solid #8c8c8c"></div><svg style="left:76px;top:46px" width="22" height="22"><defs><linearGradient id="fg" x1="0" y1="0" x2="0" y2="1"><stop offset="0" stop-color="#f2c860"/><stop offset="1" stop-color="#d08a10"/></linearGradient></defs><path d="M2.6 6 Q2.6 5 3.6 5 L20 5.5 Q20.8 5.6 20.8 6.5 L20.8 18 L2.6 18 Z" fill="#d89a18"/><path d="M4.5 1.2 L14.5 1 L16.8 3.5 L17 12 L5 12 Z" fill="#f8f8f8" stroke="#a0a0a0" stroke-width="0.6"/><path d="M7 4 H14 M7 6 H14 M7 8 H14" stroke="#b0b0b0" stroke-width="0.7" fill="none"/><path d="M0.9 11 Q0.9 9.9 2 9.9 L17.5 9.9 Q19.8 10 20.2 11.5 L21.1 19.8 Q21.1 20.8 20 20.8 L3 20.8 Q1.8 20.8 1.6 19.6 Z" fill="url(#fg)"/></svg><div style="left:104px;top:40px;width:34px;height:34px;background:#eeeeee"></div><div style="left:105px;top:41px;width:33px;height:33px;border:1px solid #fff"></div><div style="left:104px;top:40px;width:33px;height:33px;border:1px solid #8c8c8c"></div><svg style="left:110px;top:46px" width="22" height="22"><path d="M2 1.5 L14 1.5 L20 7 L20 15 L15 20.5 L2 20.5 Z" fill="#f2f2f2" stroke="#b4b4b4" stroke-width="0.8"/><path d="M15 20.5 Q15 16 20 15 Q17 15 15 20.5 Z" fill="#ddd" stroke="#b4b4b4" stroke-width="0.6"/><circle cx="16.5" cy="5.5" r="5.5" fill="#cc1a1a"/><circle cx="16.5" cy="5.5" r="4.2" fill="#e04a10" opacity="0.5"/><path d="M14.2 3.2 L18.8 7.8 M18.8 3.2 L14.2 7.8" stroke="#fff" stroke-width="1.7"/></svg><div style="left:138px;top:40px;width:34px;height:34px;background:#eeeeee"></div><div style="left:139px;top:41px;width:33px;height:33px;border:1px solid #fff"></div><div style="left:138px;top:40px;width:33px;height:33px;border:1px solid #8c8c8c"></div><svg style="left:144px;top:46px" width="22" height="22"><rect x="1.5" y="1.5" width="19.5" height="19.5" rx="1" fill="#2b2b2b"/><rect x="4.5" y="2" width="13.5" height="8.5" fill="#e6eef8"/><path d="M6 5 H16 M6 7 H16" stroke="#8aa8cc" stroke-width="0.8" fill="none"/><rect x="6" y="14" width="10" height="7" fill="#cfcfcf"/><rect x="7" y="15" width="2.5" height="4" fill="#2b2b2b"/></svg><div style="left:172px;top:40px;width:34px;height:34px;background:#eeeeee"></div><div style="left:173px;top:41px;width:33px;height:33px;border:1px solid #fff"></div><div style="left:172px;top:40px;width:33px;height:33px;border:1px solid #8c8c8c"></div><svg style="left:178px;top:46px" width="22" height="22"><rect x="1.5" y="1.5" width="19.5" height="19.5" rx="1" fill="#2b2b2b"/><rect x="4.5" y="2" width="13.5" height="8.5" fill="#e6eef8"/><path d="M6 5 H16 M6 7 H16" stroke="#8aa8cc" stroke-width="0.8" fill="none"/><rect x="6" y="14" width="10" height="7" fill="#cfcfcf"/><rect x="7" y="15" width="2.5" height="4" fill="#2b2b2b"/><path d="M2 21 L17 4" stroke="#e8c020" stroke-width="3.2"/><path d="M2 21 L17 4" stroke="#222" stroke-width="1"/><path d="M16 3 L18.5 5.5" stroke="#d82020" stroke-width="2.4"/></svg><div style="left:216px;top:40px;width:34px;height:34px;background:#eeeeee"></div><div style="left:217px;top:41px;width:33px;height:33px;border:1px solid #f6f6f6"></div><div style="left:216px;top:40px;width:33px;height:33px;border:1px solid #c4c4c4"></div><svg style="left:222px;top:46px" width="22" height="22"><path d="M0.5 1.5 Q0.5 0.5 1.5 1 L3.5 2.5 Q7 0.2 11.5 1 Q21.5 3 21.8 12 Q21.5 17 17 18 Q19 15 18 11.5 Q16.5 8 13 8.8 Q11.5 9.5 11 11 Q10.5 11.8 9.5 11.8 L1.5 11.8 Q0.5 11.8 0.5 10.8 Z" fill="#cfcfcf"/></svg><div style="left:250px;top:40px;width:34px;height:34px;background:#eeeeee"></div><div style="left:251px;top:41px;width:33px;height:33px;border:1px solid #f6f6f6"></div><div style="left:250px;top:40px;width:33px;height:33px;border:1px solid #c4c4c4"></div><svg style="left:256px;top:46px" width="22" height="22"><g transform="translate(22,0) scale(-1,1)"><path d="M0.5 1.5 Q0.5 0.5 1.5 1 L3.5 2.5 Q7 0.2 11.5 1 Q21.5 3 21.8 12 Q21.5 17 17 18 Q19 15 18 11.5 Q16.5 8 13 8.8 Q11.5 9.5 11 11 Q10.5 11.8 9.5 11.8 L1.5 11.8 Q0.5 11.8 0.5 10.8 Z" fill="#cfcfcf"/></g></svg><div style="left:284px;top:40px;width:34px;height:34px;background:#eeeeee"></div><div style="left:285px;top:41px;width:33px;height:33px;border:1px solid #fff"></div><div style="left:284px;top:40px;width:33px;height:33px;border:1px solid #8c8c8c"></div><svg style="left:290px;top:46px" width="22" height="22"><path d="M3.5 0.8 L10.8 13.5 M17.7 0.8 L10.4 13.5" stroke="#777" stroke-width="2.6" fill="none" stroke-linecap="round"/><path d="M3.5 0.8 L10.8 13.5 M17.7 0.8 L10.4 13.5" stroke="#f0f0f0" stroke-width="1.2" fill="none" stroke-linecap="round"/><circle cx="6" cy="16.9" r="3.1" fill="none" stroke="#dd1111" stroke-width="2.1"/><circle cx="15.4" cy="16.9" r="3.1" fill="none" stroke="#dd1111" stroke-width="2.1"/><path d="M8.5 14.5 L10.6 12.8 L12.8 14.5" stroke="#dd1111" stroke-width="2" fill="none"/></svg><div style="left:318px;top:40px;width:34px;height:34px;background:#eeeeee"></div><div style="left:319px;top:41px;width:33px;height:33px;border:1px solid #fff"></div><div style="left:318px;top:40px;width:33px;height:33px;border:1px solid #8c8c8c"></div><svg style="left:324px;top:46px" width="22" height="22"><rect x="0.7" y="0.7" width="13.8" height="16.6" rx="1" fill="#f8f8f8" stroke="#a8a8a8" stroke-width="0.9"/><path d="M3 4.3 H7 M3 6.3 H7 M3 8.3 H7 M3 10.3 H7 M3 12.3 H7" stroke="#d4d4d4" stroke-width="0.8" fill="none"/><path d="M7.5 4.5 H20.5 Q21 4.5 21 5 V16.5 L16 21.3 H8 Q7.5 21.3 7.5 20.8 Z" fill="#fbfbfb" stroke="#8a8a8a" stroke-width="1"/><path d="M16 21.3 V17 Q16 16.5 16.5 16.5 H21 Z" fill="#dcdcdc" stroke="#8a8a8a" stroke-width="0.7"/><path d="M10 8.3 H18 M10 10.3 H18 M10 12.3 H16.5 M10 14.3 H18" stroke="#9a9a9a" stroke-width="0.8" fill="none"/></svg><div style="left:352px;top:40px;width:34px;height:34px;background:#eeeeee"></div><div style="left:353px;top:41px;width:33px;height:33px;border:1px solid #fff"></div><div style="left:352px;top:40px;width:33px;height:33px;border:1px solid #8c8c8c"></div><svg style="left:358px;top:46px" width="22" height="22"><rect x="2.2" y="2.2" width="17.6" height="18.8" rx="1.8" fill="#d08a20" stroke="#8a5a08" stroke-width="0.9"/><path d="M4.6 5 H17.2 V15.5 L13.5 19.2 H4.6 Z" fill="#f6f6f6" stroke="#7a8088" stroke-width="0.6"/><path d="M13.5 19.2 V16 H17.2 Z" fill="#d8d8d8"/><path d="M7.5 4.5 Q7.5 1 11 1 Q14.5 1 14.5 4.5 Z" fill="#b8b8a8" stroke="#666" stroke-width="0.8"/><path d="M6.5 7.8 H14.5 M6.5 9.8 H14.5 M6.5 11.8 H10.5" stroke="#888" stroke-width="0.8" fill="none"/></svg><div style="left:396px;top:40px;width:34px;height:34px;background:#eeeeee"></div><div style="left:397px;top:41px;width:33px;height:33px;border:1px solid #fff"></div><div style="left:396px;top:40px;width:33px;height:33px;border:1px solid #8c8c8c"></div><svg style="left:402px;top:46px" width="22" height="22"><path d="M9 3.5 H13 V9 H18.5 V13 H13 V18.5 H9 V13 H3.5 V9 H9 Z" fill="#c5d8ee" stroke="#2f62a8" stroke-width="1.2"/></svg><div style="left:430px;top:40px;width:34px;height:34px;background:#eeeeee"></div><div style="left:431px;top:41px;width:33px;height:33px;border:1px solid #fff"></div><div style="left:430px;top:40px;width:33px;height:33px;border:1px solid #8c8c8c"></div><svg style="left:436px;top:46px" width="22" height="22"><rect x="3.5" y="9" width="15" height="4" rx="0.8" fill="#c5d8ee" stroke="#2f62a8" stroke-width="1.2"/></svg><div style="left:464px;top:40px;width:34px;height:34px;background:#eeeeee"></div><div style="left:465px;top:41px;width:33px;height:33px;border:1px solid #fff"></div><div style="left:464px;top:40px;width:33px;height:33px;border:1px solid #8c8c8c"></div><svg style="left:470px;top:46px" width="22" height="22"><path d="M1.5 11.3 L7.8 5.3" stroke="#999" stroke-width="2" stroke-linecap="round"/><path d="M1.5 11.3 L7.8 5.3" stroke="#f4f4f4" stroke-width="0.9"/><path d="M6.8 4.8 L10.5 1.2 Q11.8 0.5 12.2 1.8 L8.8 6.5 Z" fill="#5aa84a"/><path d="M10.5 20.3 L16.8 14.3" stroke="#999" stroke-width="2" stroke-linecap="round"/><path d="M10.5 20.3 L16.8 14.3" stroke="#f4f4f4" stroke-width="0.9"/><path d="M15.8 13.8 L19.5 10.2 Q20.8 9.5 21.2 10.8 L17.8 15.5 Z" fill="#5aa84a"/><path d="M8.5 8 L12.2 11.5" stroke="#1a6ae8" stroke-width="1.4"/><path d="M10.2 12.8 L13.8 12.8 L13.8 9.2 Z" fill="#1a6ae8"/><path d="M2.5 12.5 H10" stroke="#d0d0d0" stroke-width="0.6"/></svg><div style="left:508px;top:40px;width:34px;height:34px;background:#eeeeee"></div><div style="left:509px;top:41px;width:33px;height:33px;border:1px solid #fff"></div><div style="left:508px;top:40px;width:33px;height:33px;border:1px solid #8c8c8c"></div><svg style="left:514px;top:46px" width="22" height="22"><defs><linearGradient id="pg" x1="0" y1="0" x2="0" y2="1"><stop offset="0" stop-color="#6ac46a"/><stop offset="0.5" stop-color="#0a8a0a"/><stop offset="0.55" stop-color="#10c010"/><stop offset="1" stop-color="#0a7a0a"/></linearGradient></defs><path d="M6 2 L18 11 L6 20 Z" fill="url(#pg)" stroke="#0a6a0a" stroke-width="0.6"/></svg><div style="left:542px;top:40px;width:34px;height:34px;background:#eeeeee"></div><div style="left:543px;top:41px;width:33px;height:33px;border:1px solid #fff"></div><div style="left:542px;top:40px;width:33px;height:33px;border:1px solid #8c8c8c"></div><svg style="left:548px;top:46px" width="22" height="22"><path d="M6 2 L18 11 L6 20 Z" fill="url(#pg)" stroke="#0a6a0a" stroke-width="0.6"/><circle cx="15" cy="16" r="4" fill="#fff" stroke="#3a6ad0" stroke-width="1.4"/><path d="M10.5 21 L19 11.5" stroke="#e02020" stroke-width="1.4"/></svg><div style="left:576px;top:40px;width:34px;height:34px;background:#eeeeee"></div><div style="left:577px;top:41px;width:33px;height:33px;border:1px solid #f6f6f6"></div><div style="left:576px;top:40px;width:33px;height:33px;border:1px solid #c4c4c4"></div><svg style="left:582px;top:46px" width="22" height="22"><path d="M6.5 0 H15.5 L22 6.5 V15.5 L15.5 22 H6.5 L0 15.5 V6.5 Z" fill="#bdbdbd"/><text x="11" y="14.6" font-size="9" font-weight="bold" text-anchor="middle" fill="#d0d0d0" font-family="Liberation Sans" transform="translate(11 0) scale(0.85 1) translate(-11 0)" letter-spacing="-0.3">STOP</text></svg><div style="left:610px;top:40px;width:34px;height:34px;background:#eeeeee"></div><div style="left:611px;top:41px;width:33px;height:33px;border:1px solid #f6f6f6"></div><div style="left:610px;top:40px;width:33px;height:33px;border:1px solid #c4c4c4"></div><svg style="left:616px;top:46px" width="22" height="22"><path d="M7.2 2 H14.6 L19.8 7.2 V14.6 L14.6 19.8 H7.2 L2 14.6 V7.2 Z" fill="#c0c0c0" stroke="#b4b4b4" stroke-width="0.6"/><path d="M7.3 7.3 L14.5 14.5 M14.5 7.3 L7.3 14.5" stroke="#d8d8d8" stroke-width="2.8"/></svg><div style="left:654px;top:40px;width:34px;height:34px;background:#eeeeee"></div><div style="left:655px;top:41px;width:33px;height:33px;border:1px solid #fff"></div><div style="left:654px;top:40px;width:33px;height:33px;border:1px solid #8c8c8c"></div><svg style="left:660px;top:46px" width="22" height="22"><path d="M1.7 0.8 L10.1 6.4 L1.7 12 Z" fill="url(#pg)"/><path d="M11.8 9.8 L19.8 15.5 L11.8 21.1 Z" fill="url(#pg)"/><path d="M5.5 14 Q6 17 9 16.5" stroke="#4a7ac8" stroke-width="1.8" fill="none"/><path d="M8.5 14.5 L11 16.5 L8.5 18.5 Z" fill="#4a7ac8"/></svg><div style="left:688px;top:40px;width:34px;height:34px;background:#eeeeee"></div><div style="left:689px;top:41px;width:33px;height:33px;border:1px solid #f6f6f6"></div><div style="left:688px;top:40px;width:33px;height:33px;border:1px solid #c4c4c4"></div><svg style="left:694px;top:46px" width="22" height="22"><path d="M3.6 2 H7.4 L10 4.6 V8.4 L7.4 11 H3.6 L1 8.4 V4.6 Z" fill="#c6c6c6"/><path d="M13.3 11 H17.1 L19.7 13.6 V17.4 L17.1 20 H13.3 L10.7 17.4 V13.6 Z" fill="#c6c6c6"/><path d="M6.5 13.5 Q7 16 9.5 15.5" stroke="#d0d0d0" stroke-width="1.6" fill="none"/></svg><div style="left:722px;top:40px;width:34px;height:34px;background:#eeeeee"></div><div style="left:723px;top:41px;width:33px;height:33px;border:1px solid #f6f6f6"></div><div style="left:722px;top:40px;width:33px;height:33px;border:1px solid #c4c4c4"></div><svg style="left:728px;top:46px" width="22" height="22"><path d="M4.1 2 H7.9 L10.5 4.6 V8.4 L7.9 11 H4.1 L1.5 8.4 V4.6 Z" fill="#c6c6c6"/><path d="M13.5 11 H17.3 L19.9 13.6 V17.4 L17.3 20 H13.5 L10.9 17.4 V13.6 Z" fill="#c6c6c6"/><path d="M4.5 4.5 L7.5 8.5 M7.5 4.5 L4.5 8.5 M13.9 13.5 L16.9 17.5 M16.9 13.5 L13.9 17.5" stroke="#d8d8d8" stroke-width="1.2"/><path d="M7 13.5 Q7.5 16 10 15.5" stroke="#d0d0d0" stroke-width="1.6" fill="none"/></svg><div style="left:766px;top:40px;width:34px;height:34px;background:#eeeeee"></div><div style="left:767px;top:41px;width:33px;height:33px;border:1px solid #fff"></div><div style="left:766px;top:40px;width:33px;height:33px;border:1px solid #8c8c8c"></div><svg style="left:772px;top:46px" width="22" height="22"><defs><linearGradient id="brg" x1="0" y1="0" x2="1" y2="1"><stop offset="0" stop-color="#d8b080"/><stop offset="1" stop-color="#a87840"/></linearGradient></defs><path d="M7.03 2.45 L7.09 0.17 L10.51 0.17 L10.57 2.45 L12.51 3.38 L14.32 2.01 L16.45 4.68 L14.71 6.15 L15.19 8.24 L17.40 8.81 L16.64 12.14 L14.40 11.69 L13.06 13.37 L14.00 15.45 L10.92 16.94 L9.88 14.91 L7.72 14.91 L6.68 16.94 L3.60 15.45 L4.54 13.37 L3.20 11.69 L0.96 12.14 L0.20 8.81 L2.41 8.24 L2.89 6.15 L1.15 4.68 L3.28 2.01 L5.09 3.38 Z" fill="#f2f2f2" stroke="#c4c4c4" stroke-width="0.7"/><circle cx="9" cy="9" r="3" fill="#52b820"/><circle cx="8.3" cy="8.2" r="1.2" fill="#a0e070"/><path d="M19.5 0.5 L16.5 8" stroke="#b88a50" stroke-width="1.6"/><path d="M14.5 7 L19 8.5 L17.5 21 L5.5 18.5 Z" fill="url(#brg)"/><path d="M9 17 L15 9 M12 19 L17 9 M15 20 L18 10" stroke="#8a6030" stroke-width="0.5"/></svg><div style="left:800px;top:40px;width:34px;height:34px;background:#eeeeee"></div><div style="left:801px;top:41px;width:33px;height:33px;border:1px solid #fff"></div><div style="left:800px;top:40px;width:33px;height:33px;border:1px solid #8c8c8c"></div><svg style="left:806px;top:46px" width="22" height="22"><path d="M7.03 2.45 L7.09 0.17 L10.51 0.17 L10.57 2.45 L12.51 3.38 L14.32 2.01 L16.45 4.68 L14.71 6.15 L15.19 8.24 L17.40 8.81 L16.64 12.14 L14.40 11.69 L13.06 13.37 L14.00 15.45 L10.92 16.94 L9.88 14.91 L7.72 14.91 L6.68 16.94 L3.60 15.45 L4.54 13.37 L3.20 11.69 L0.96 12.14 L0.20 8.81 L2.41 8.24 L2.89 6.15 L1.15 4.68 L3.28 2.01 L5.09 3.38 Z" fill="#f2f2f2" stroke="#c4c4c4" stroke-width="0.7"/><circle cx="9" cy="9" r="3" fill="#52b820"/><path d="M13.5 0.5 L11 8" stroke="#b88a50" stroke-width="1.6"/><path d="M9.5 7 L13.5 8.5 L12 21 L2.5 18.5 Z" fill="url(#brg)"/><path d="M19.5 0.5 L17 8" stroke="#b88a50" stroke-width="1.6"/><path d="M15.5 7 L19.5 8.5 L18 21 L9 19 Z" fill="url(#brg)"/><path d="M6 17 L11 9 M9 19 L12.5 9 M12 19 L17 9 M15 20 L18.5 10" stroke="#8a6030" stroke-width="0.5"/></svg><div style="left:844px;top:40px;width:34px;height:34px;background:#eeeeee"></div><div style="left:845px;top:41px;width:33px;height:33px;border:1px solid #fff"></div><div style="left:844px;top:40px;width:33px;height:33px;border:1px solid #8c8c8c"></div><svg style="left:850px;top:46px" width="22" height="22"><path d="M3.5 8 Q5 4.5 8 6.5 L9 9 H13 L14 6.5 Q17 4.5 18.5 8 L21 14.5 Q21 19.5 16 19.5 Q12 19.5 12 14.5 H10 Q10 19.5 6 19.5 Q1 19.5 1 14.5 Z" fill="#2a2a2a"/><circle cx="5.8" cy="14.5" r="3.2" fill="#b8600f" stroke="#111" stroke-width="0.8"/><circle cx="16.2" cy="14.5" r="3.2" fill="#b8600f" stroke="#111" stroke-width="0.8"/><circle cx="5" cy="13.8" r="1" fill="#f0b070"/><circle cx="15.4" cy="13.8" r="1" fill="#f0b070"/></svg><div style="left:878px;top:40px;width:34px;height:34px;background:#eeeeee"></div><div style="left:879px;top:41px;width:33px;height:33px;border:1px solid #fff"></div><div style="left:878px;top:40px;width:33px;height:33px;border:1px solid #8c8c8c"></div><svg style="left:884px;top:46px" width="22" height="22"><circle cx="3.5" cy="2.8" r="2.6" fill="#c8883a"/><path d="M4 4 L8 9" stroke="#e0c040" stroke-width="2.6"/><path d="M5.5 9.5 L10 6.5 L11 8.2 L6.8 11 Z" fill="#e02020"/><defs><linearGradient id="yb" x1="0" y1="0" x2="1" y2="1"><stop offset="0" stop-color="#f4e060"/><stop offset="1" stop-color="#c8a818"/></linearGradient></defs><path d="M6.5 11 L11 8 L20.5 17 Q17 21.5 12.5 21.5 Z" fill="url(#yb)" stroke="#b89a18" stroke-width="0.6"/><path d="M9 13 L14 20 M11 11 L17 18" stroke="#c8a818" stroke-width="0.5" fill="none"/></svg><div style="left:922px;top:40px;width:34px;height:34px;background:#eeeeee"></div><div style="left:923px;top:41px;width:33px;height:33px;border:1px solid #fff"></div><div style="left:922px;top:40px;width:33px;height:33px;border:1px solid #8c8c8c"></div><svg style="left:928px;top:46px" width="22" height="22"><rect x="4.5" y="2.5" width="14" height="18" rx="1" fill="#fafafa" stroke="#9a9a9a" stroke-width="0.8"/><path d="M2 4.5 H6 M2 10.5 H6 M2 16.5 H6" stroke="#222" stroke-width="1.8" fill="none"/><path d="M8 4.5 H16.5 M8 6.5 H11 M8 10.5 H16.5 M8 12.5 H16.5 M8 16.5 H16.5 M8 18.5 H12" stroke="#1a5ae0" stroke-width="0.9" fill="none"/><rect x="18.5" y="10" width="1.8" height="4" fill="#1a6ae0"/><rect x="18.5" y="15" width="1.8" height="4.5" fill="#1a9a1a"/></svg><div style="left:956px;top:40px;width:34px;height:34px;background:#eeeeee"></div><div style="left:957px;top:41px;width:33px;height:33px;border:1px solid #fff"></div><div style="left:956px;top:40px;width:33px;height:33px;border:1px solid #8c8c8c"></div><svg style="left:962px;top:46px" width="22" height="22"><defs><linearGradient id="hb" x1="0" y1="0" x2="1" y2="1"><stop offset="0" stop-color="#5a9ae6"/><stop offset="1" stop-color="#3a78c8"/></linearGradient></defs><rect x="2" y="0.5" width="17" height="20.5" rx="1.2" fill="url(#hb)"/><rect x="2" y="0.5" width="3.2" height="20.5" rx="1" fill="#151515"/><path d="M9.5 7 Q9.5 3.5 12.5 3.5 Q15.5 3.5 15.5 6.5 Q15.5 8.5 12.8 10 V12.5" stroke="#fff" stroke-width="1.3" fill="none"/><circle cx="12.8" cy="15.5" r="1" fill="#fff"/></svg>
</body></html>
